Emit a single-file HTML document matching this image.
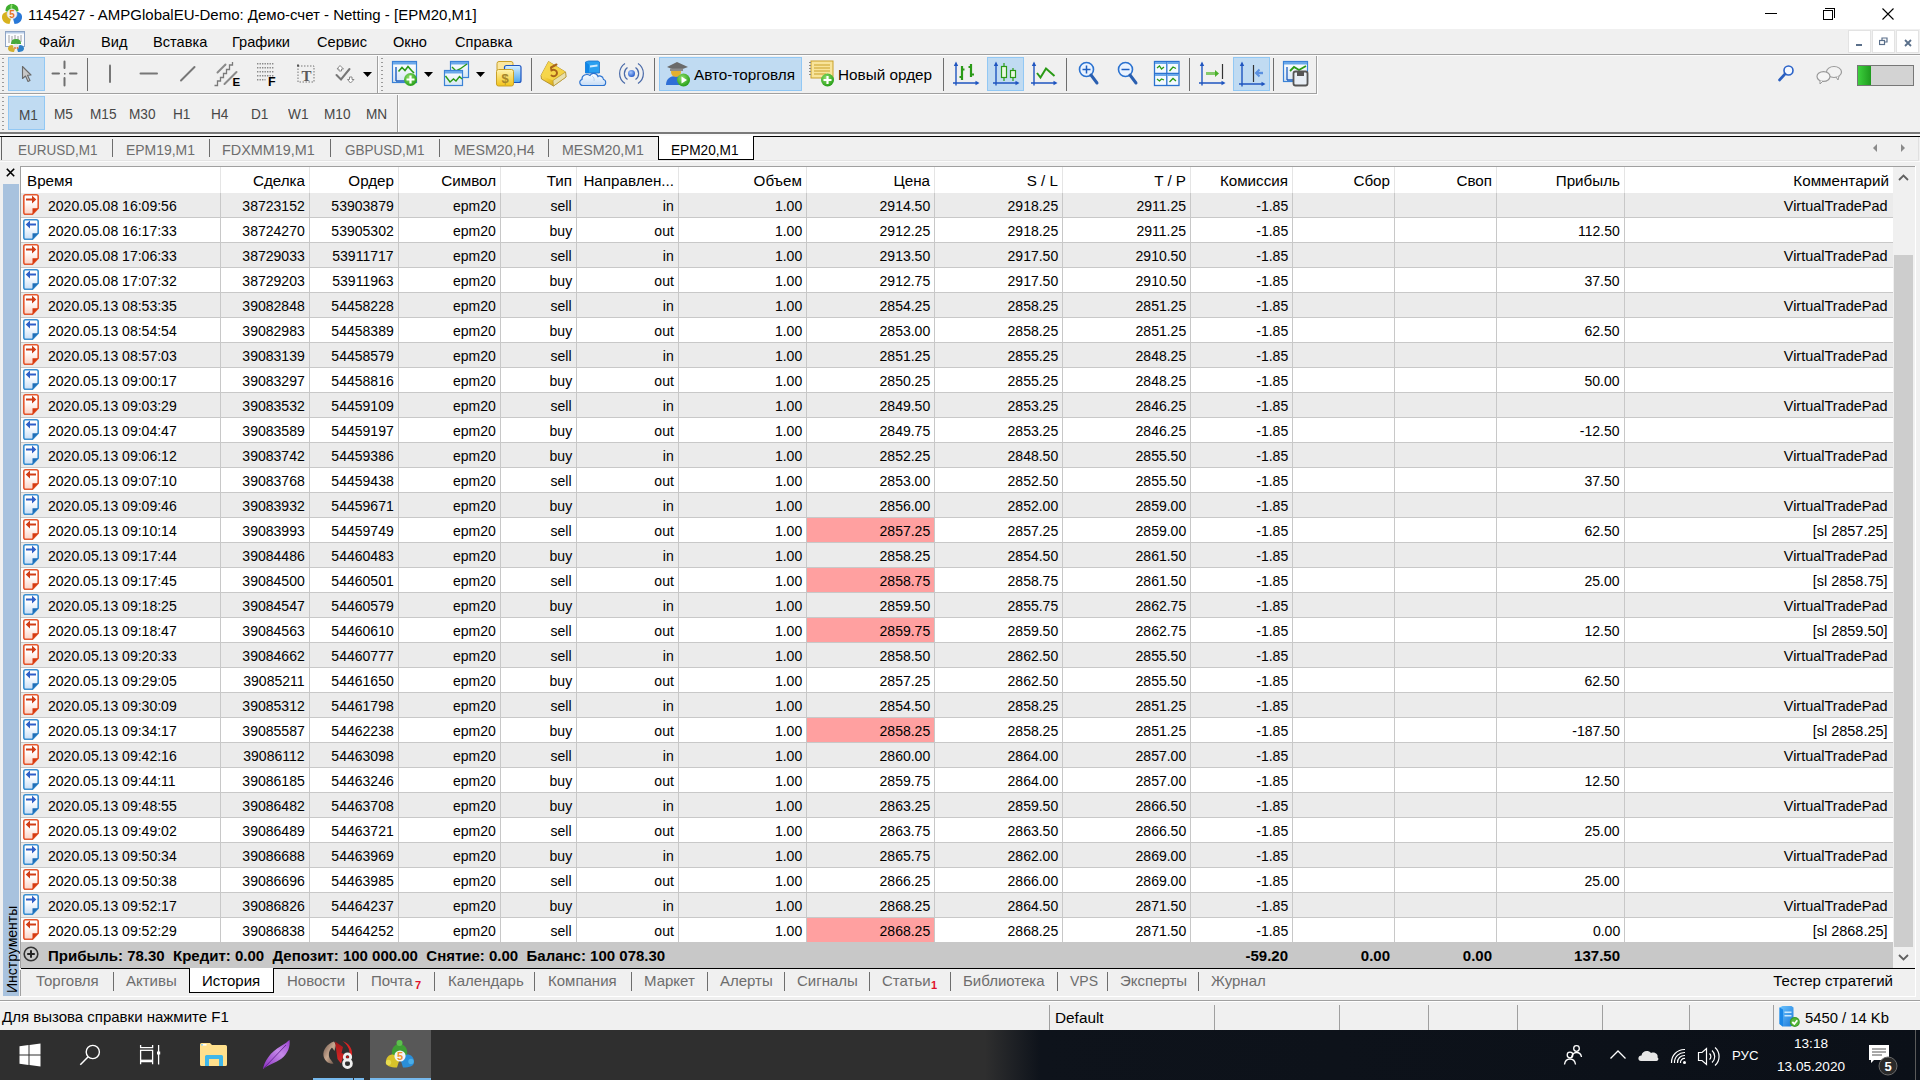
<!DOCTYPE html><html><head><meta charset="utf-8"><title>MT5</title><style>
*{box-sizing:border-box}
html,body{margin:0;padding:0}
body{width:1920px;height:1080px;overflow:hidden;position:relative;background:#f0f0f0;font-family:"Liberation Sans",sans-serif;}
.t{position:absolute;white-space:pre}
.a{position:absolute}
.hl{position:absolute;background:#c0dbf2;border:1px solid #92c8f4}
.sep{position:absolute;width:1px;background:#a0a0a0}
</style></head><body>
<div class="a" style="left:0;top:0;width:1920px;height:29px;background:#fff"></div>
<svg class="a" style="left:0;top:0" width="26" height="28" viewBox="0 0 26 28">
<path d="M5.5 11C5.5 6 8.5 4 12 4C15.5 4 18.5 6 18.5 11L12 14Z" fill="#3fae2e"/>
<path d="M12 4.5C11 6 11 8 12 9.5" stroke="#8ee070" stroke-width="1.5" fill="none"/>
<path d="M2 17C2 13.5 4.5 12 7.5 12L12 15L9.5 24C5 24 2 21 2 17Z" fill="#d8b21e"/>
<path d="M22 17C22 13.5 19.5 12 16.5 12L12 15L14.5 24C19 24 22 21 22 17Z" fill="#2878d8"/>
<circle cx="12" cy="14" r="5" fill="#f2f2f2" stroke="#d8d8d8" stroke-width="0.6"/>
<text x="12" y="17.8" font-size="10" font-weight="bold" text-anchor="middle" fill="#e8761e" font-family="Liberation Sans">5</text>
</svg>
<div class="t" style="left:28px;top:7px;font-size:15px;line-height:15px;color:#000;font-weight:normal;">1145427 - AMPGlobalEU-Demo: Демо-счет - Netting - [EPM20,M1]</div>
<div class="a" style="left:1765px;top:13px;width:12px;height:1px;background:#000"></div>
<div class="a" style="left:1823px;top:10px;width:10px;height:10px;border:1px solid #000;background:#fff"></div>
<div class="a" style="left:1825px;top:8px;width:10px;height:10px;border-top:1px solid #000;border-right:1px solid #000"></div>
<svg class="a" style="left:1882px;top:8px" width="12" height="12" viewBox="0 0 12 12"><path d="M0.5 0.5L11.5 11.5M11.5 0.5L0.5 11.5" stroke="#000" stroke-width="1.1"/></svg>
<div class="a" style="left:0;top:29px;width:1920px;height:25px;background:#f0f0f0"></div>
<div class="a" style="left:0;top:54px;width:1920px;height:1px;background:#a0a0a0"></div>
<div class="a" style="left:0;top:55px;width:1920px;height:1px;background:#fdfdfd"></div>
<svg class="a" style="left:4px;top:30px" width="22" height="24" viewBox="0 0 22 24">
<rect x="1.5" y="1.5" width="19" height="15" fill="#fafcff" stroke="#8ea4c4" stroke-width="1"/>
<rect x="2" y="2" width="18" height="1.5" fill="#b8cce6"/>
<g stroke="#888" stroke-width="0.8"><path d="M5 5V13M8 6V11M11 5V9M14 6V10M17 5V12"/></g>
<path d="M7 14C7 10 9 9 12 9C15 9 17 10 17 14Z" fill="#46a83a"/>
<path d="M4 18.5C4 16 6 15 8 15L11.5 17L10 22C6.5 22 4 21 4 18.5Z" fill="#d2b030"/>
<path d="M20 18.5C20 16 18 15 16 15L12.5 17L14 22C17.5 22 20 21 20 18.5Z" fill="#2f80c8"/>
<circle cx="12" cy="16.5" r="2.8" fill="#e8e8e8"/>
<circle cx="11" cy="18" r="0.9" fill="#e07030"/><circle cx="13.5" cy="18" r="0.9" fill="#e07030"/>
</svg>
<div class="t" style="left:39px;top:35px;font-size:14.6px;line-height:14.6px;color:#000;font-weight:normal;">Файл</div>
<div class="t" style="left:101px;top:35px;font-size:14.6px;line-height:14.6px;color:#000;font-weight:normal;">Вид</div>
<div class="t" style="left:153px;top:35px;font-size:14.6px;line-height:14.6px;color:#000;font-weight:normal;">Вставка</div>
<div class="t" style="left:232px;top:35px;font-size:14.6px;line-height:14.6px;color:#000;font-weight:normal;">Графики</div>
<div class="t" style="left:317px;top:35px;font-size:14.6px;line-height:14.6px;color:#000;font-weight:normal;">Сервис</div>
<div class="t" style="left:393px;top:35px;font-size:14.6px;line-height:14.6px;color:#000;font-weight:normal;">Окно</div>
<div class="t" style="left:455px;top:35px;font-size:14.6px;line-height:14.6px;color:#000;font-weight:normal;">Справка</div>
<div class="a" style="left:1848px;top:30px;width:23px;height:23px;background:#fff;border:1px solid #e3e3e3"></div>
<div class="a" style="left:1872px;top:30px;width:23px;height:23px;background:#fff;border:1px solid #e3e3e3"></div>
<div class="a" style="left:1896px;top:30px;width:23px;height:23px;background:#fff;border:1px solid #e3e3e3"></div>
<div class="a" style="left:1856px;top:44px;width:6px;height:2px;background:#5a6f8a"></div>
<svg class="a" style="left:1879px;top:37px" width="9" height="9" viewBox="0 0 9 9"><rect x="0.5" y="3.5" width="5" height="4" fill="none" stroke="#5a6f8a" stroke-width="1.2"/><path d="M3 3.5V1h5v4H5.5" fill="none" stroke="#5a6f8a" stroke-width="1.2"/></svg>
<svg class="a" style="left:1904px;top:39px" width="8" height="8" viewBox="0 0 8 8"><path d="M1 1L7 7M7 1L1 7" stroke="#5a6f8a" stroke-width="1.8"/></svg>
<div class="hl" style="left:8px;top:57px;width:37px;height:34px"></div>
<div class="hl" style="left:659px;top:57px;width:143px;height:34px"></div>
<div class="hl" style="left:987px;top:57px;width:37px;height:34px"></div>
<div class="hl" style="left:1233px;top:57px;width:37px;height:34px"></div>
<div class="t" style="left:694px;top:65px;font-size:15.3px;line-height:20px;color:#000">Авто-торговля</div>
<div class="t" style="left:838px;top:65px;font-size:15.3px;line-height:20px;color:#000">Новый ордер</div>
<svg class="a" style="left:0;top:0" width="1920" height="96" viewBox="0 0 1920 96">
<defs>
<linearGradient id="winbg" x1="0" y1="0" x2="0" y2="1"><stop offset="0" stop-color="#ffffff"/><stop offset="1" stop-color="#d6e6f5"/></linearGradient>
<radialGradient id="greenb" cx="0.4" cy="0.35" r="0.7"><stop offset="0" stop-color="#8fe06a"/><stop offset="1" stop-color="#1f9a12"/></radialGradient>
<linearGradient id="yel" x1="0" y1="0" x2="0" y2="1"><stop offset="0" stop-color="#fff3b0"/><stop offset="1" stop-color="#f2c418"/></linearGradient>
<linearGradient id="blu" x1="0" y1="0" x2="0" y2="1"><stop offset="0" stop-color="#d8f0ff"/><stop offset="1" stop-color="#4aa6ef"/></linearGradient>
<linearGradient id="cloudg" x1="0" y1="0" x2="0" y2="1"><stop offset="0" stop-color="#ffffff"/><stop offset="1" stop-color="#c6dcf5"/></linearGradient>
<radialGradient id="blued" cx="0.4" cy="0.35" r="0.7"><stop offset="0" stop-color="#a6c8ff"/><stop offset="1" stop-color="#1f55c8"/></radialGradient>
</defs>
<!-- grippers -->
<g fill="#9a9a9a">
<rect x="2" y="58" width="2" height="1"/><rect x="2" y="62" width="2" height="1"/><rect x="2" y="66" width="2" height="1"/><rect x="2" y="70" width="2" height="1"/><rect x="2" y="74" width="2" height="1"/><rect x="2" y="78" width="2" height="1"/><rect x="2" y="82" width="2" height="1"/><rect x="2" y="86" width="2" height="1"/><rect x="2" y="90" width="2" height="1"/>
<rect x="381" y="58" width="2" height="1"/><rect x="381" y="62" width="2" height="1"/><rect x="381" y="66" width="2" height="1"/><rect x="381" y="70" width="2" height="1"/><rect x="381" y="74" width="2" height="1"/><rect x="381" y="78" width="2" height="1"/><rect x="381" y="82" width="2" height="1"/><rect x="381" y="86" width="2" height="1"/><rect x="381" y="90" width="2" height="1"/>
</g>
<!-- toolbar ends / separators -->
<rect x="377" y="56" width="1" height="37" fill="#a0a0a0"/><rect x="378" y="56" width="1" height="37" fill="#fdfdfd"/>
<rect x="1316" y="56" width="1" height="37" fill="#a0a0a0"/>
<g fill="#6e6e6e">
<rect x="87" y="58" width="1" height="33"/>
<rect x="531" y="58" width="1" height="33"/>
<rect x="654" y="58" width="1" height="33"/>
<rect x="943" y="58" width="1" height="33"/>
<rect x="1066" y="58" width="1" height="33"/>
<rect x="1189" y="58" width="1" height="33"/>
<rect x="1273" y="58" width="1" height="33"/>
</g>
<!-- cursor -->
<path d="M22.5 66.5L22.5 78.5L25.5 76L28 81.5L30 80.5L27.5 75.2L31 75Z" fill="#c8c8c8" stroke="#6a6a6a" stroke-width="1.1" stroke-linejoin="round"/>
<!-- crosshair -->
<g stroke="#6f6f6f" stroke-width="2" stroke-linecap="round">
<path d="M64.5 61.5V68M64.5 78V85.5M52.5 73.5H59M70 73.5H76.5"/>
</g>
<rect x="64" y="73" width="1.5" height="1.5" fill="#6f6f6f"/>
<!-- vertical line -->
<path d="M110 65.5V82" stroke="#777" stroke-width="2" stroke-linecap="round"/>
<!-- horizontal line -->
<path d="M140.5 73.5H157" stroke="#777" stroke-width="2" stroke-linecap="round"/>
<!-- trendline -->
<path d="M181 80.5L194.5 67" stroke="#777" stroke-width="2" stroke-linecap="round"/>
<!-- channel E -->
<g stroke="#8a8a8a" stroke-width="2" stroke-linecap="round" fill="none">
<path d="M217.5 72.5L225.5 64.5"/><path d="M224.5 84L236.5 72"/>
</g>
<path d="M214.5 85.5H217.5V81H220.5V77.5H223.5V73.5H226.5V69.5H229.5V65H232.5V62" stroke="#7a7a7a" stroke-width="1.3" fill="none"/>
<text x="232.5" y="86" font-family="Liberation Sans" font-weight="bold" font-size="11.5" fill="#000">E</text>
<!-- fibo F -->
<g stroke="#8a8a8a" stroke-width="1.6" stroke-dasharray="1.4 1.1" fill="none">
<path d="M257 63.8H274"/><path d="M257 67.8H274"/><path d="M257 71.8H274"/><path d="M257 75.8H274"/><path d="M257 79.8H265.5"/>
</g>
<text x="268" y="86" font-family="Liberation Sans" font-weight="bold" font-size="12.5" fill="#000">F</text>
<!-- text T -->
<rect x="298" y="66" width="16" height="16" fill="none" stroke="#777" stroke-width="1" stroke-dasharray="1.5 1.5"/>
<rect x="297" y="64.5" width="2" height="2" fill="#555"/>
<text x="306.5" y="80.5" font-family="Liberation Serif" font-weight="bold" font-size="15" fill="#5a5a5a" text-anchor="middle">T</text>
<!-- arrows icon -->
<path d="M336.5 75L341 79.5L349.5 69" stroke="#777" stroke-width="2" fill="none" stroke-linecap="round"/>
<path d="M340 65.5L337 69H339V71H341.5V69H343.5Z" fill="#fff" stroke="#888" stroke-width="1"/>
<path d="M350.5 83L347.5 79.5H349.5V77H352V79.5H354Z" fill="#fff" stroke="#888" stroke-width="1"/>
<!-- dropdowns -->
<path d="M363 72H372L367.5 77Z" fill="#000"/>
<path d="M424 72H433L428.5 77Z" fill="#000"/>
<path d="M476 72H485L480.5 77Z" fill="#000"/>
<!-- new chart -->
<rect x="392.5" y="61.5" width="24" height="21" fill="url(#winbg)" stroke="#3b82d6" stroke-width="1.2"/>
<rect x="393" y="62" width="23" height="2.5" fill="#6aa8ea"/>
<path d="M396 67V81M396 81H408" stroke="#1f5fc0" stroke-width="1.4"/>
<path d="M398.5 71.5L402 67.5L405 70.5L408 66.5L411.5 70.5L414 73" stroke="#2a9a16" stroke-width="1.6" fill="none"/>
<circle cx="410.5" cy="79.5" r="6.5" fill="url(#greenb)"/>
<path d="M410.5 75.5V83.5M406.5 79.5H414.5" stroke="#fff" stroke-width="2.2"/>
<!-- profiles -->
<rect x="450.5" y="61.5" width="18" height="16" fill="url(#winbg)" stroke="#3b82d6" stroke-width="1.2"/>
<rect x="451" y="62" width="17" height="2.5" fill="#6aa8ea"/>
<path d="M452 67L456 71L460 69L467 64" stroke="#2a9a16" stroke-width="1.4" fill="none"/>
<rect x="444.5" y="70.5" width="18" height="15" fill="url(#winbg)" stroke="#3b82d6" stroke-width="1.2"/>
<rect x="445" y="71" width="17" height="2.5" fill="#6aa8ea"/>
<path d="M445.5 76L450 82L453.5 79L456 81L459.5 76.5L462 79" stroke="#2a9a16" stroke-width="1.4" fill="none"/>
<!-- dollar -->
<rect x="497" y="61.5" width="16" height="10" rx="2" fill="#fbe7a0" stroke="#c9a028" stroke-width="1"/>
<rect x="504.5" y="65.5" width="16.5" height="17" rx="2" fill="url(#blu)" stroke="#1e55c0" stroke-width="1.2"/>
<rect x="496.5" y="69.5" width="17" height="16.5" rx="2" fill="url(#yel)" stroke="#c9a028" stroke-width="1"/>
<text x="505" y="83" font-family="Liberation Sans" font-weight="bold" font-size="13" fill="#a6862a" text-anchor="middle">$</text>
<!-- book 5 -->
<defs><linearGradient id="gold" x1="0" y1="0" x2="1" y2="1"><stop offset="0" stop-color="#fff2a8"/><stop offset="0.5" stop-color="#f0c830"/><stop offset="1" stop-color="#b88a10"/></linearGradient></defs>
<path d="M541 75.5L548.5 61.5L565.5 72L566 77L553.5 86L541.5 79Z" fill="url(#gold)" stroke="#a88420" stroke-width="0.8" stroke-linejoin="round"/>
<path d="M548.5 61.5L565.5 72L553 80.5L541 75.5Z" fill="#f6d64a" opacity="0.9"/>
<path d="M553 80.5L565.5 72L566 77L553.5 86Z" fill="#e8e0b0" stroke="#b0902a" stroke-width="0.6"/>
<path d="M556.5 64.5L551 67.5L551.5 70.5C553.5 69 557 70 557 73C557 76 554 77 551.5 75.5" fill="none" stroke="#a8641a" stroke-width="2" stroke-linecap="round" stroke-linejoin="round"/>
<!-- cloud server -->
<path d="M585.5 62L588.5 61H598L599.5 62V73H585.5Z" fill="#2a9ff0" stroke="#1a70c8" stroke-width="0.8"/>
<path d="M585.5 62L589 64.5V73H585.5Z" fill="#0f86e8"/>
<path d="M590 65.5L597.5 64.5V66.5L590 67.5Z" fill="#cfeaff"/>
<path d="M582.5 85.5C579.5 85.5 578.5 80.5 582 79.5C581.5 75.5 586.5 73 590 75.5C591.5 72.5 596.5 72.5 598 76.5C598.5 75.5 603 75.5 603.5 79.5C606.5 80 606.5 85.5 603 85.5Z" fill="url(#cloudg)" stroke="#2a72d0" stroke-width="1.1"/>
<path d="M592 76C594 77 594.5 79.5 594 81" fill="none" stroke="#a8c8ee" stroke-width="0.8"/>
<!-- signal -->
<circle cx="631.5" cy="73.5" r="3.5" fill="url(#blued)"/>
<g fill="none" stroke="#4a6aa8" stroke-width="1.2">
<path d="M627.5 67.5A7.3 7.3 0 0 0 627.5 79.5"/><path d="M635.5 67.5A7.3 7.3 0 0 1 635.5 79.5"/>
<path d="M625 63.5A12 12 0 0 0 625 83.5"/><path d="M638 63.5A12 12 0 0 1 638 83.5"/>
</g>
<!-- autotrading -->
<path d="M666 85C666 79 670 76 676 76C682 76 686 79 686 85Z" fill="#2f6fd6"/>
<circle cx="676" cy="72" r="5" fill="#e2b030"/>
<path d="M667 67L677 62L688 67L677 71Z" fill="#6a6a6a"/>
<path d="M670 68.5V71H683V68.5" fill="#8a8a8a"/>
<circle cx="683.5" cy="80" r="6.5" fill="url(#greenb)"/>
<path d="M681.5 76.5V83.5L687 80Z" fill="#fff"/>
<!-- new order -->
<rect x="811" y="61" width="22" height="17" fill="#f8e49a" stroke="#c9a028" stroke-width="1"/>
<g stroke="#c9a028" stroke-width="1"><path d="M814 65H830M814 68H830M814 71H830M814 74H826"/></g>
<g fill="#888"><rect x="809" y="62" width="2" height="1"/><rect x="809" y="65" width="2" height="1"/><rect x="809" y="68" width="2" height="1"/><rect x="809" y="71" width="2" height="1"/><rect x="809" y="74" width="2" height="1"/></g>
<circle cx="827.5" cy="80" r="6.5" fill="url(#greenb)"/>
<path d="M827.5 76V84M823.5 80H831.5" stroke="#fff" stroke-width="2.2"/>
<!-- axes helper for chart icons -->
<g stroke="#1f55c0" stroke-width="1.4" fill="#1f55c0">
<path d="M956 64V85.5M953 83H976" fill="none"/><path d="M953.8 66L956 61.5L958.2 66Z" stroke="none"/><path d="M975.5 80.8L979.5 83L975.5 85.2Z" stroke="none"/>
<path d="M996 64V85.5M993 83H1016" fill="none"/><path d="M993.8 66L996 61.5L998.2 66Z" stroke="none"/><path d="M1015.5 80.8L1019.5 83L1015.5 85.2Z" stroke="none"/>
<path d="M1034 64V85.5M1031 83H1054" fill="none"/><path d="M1031.8 66L1034 61.5L1036.2 66Z" stroke="none"/><path d="M1053.5 80.8L1057.5 83L1053.5 85.2Z" stroke="none"/>
<path d="M1202 64V85.5M1199 83H1222" fill="none"/><path d="M1199.8 66L1202 61.5L1204.2 66Z" stroke="none"/><path d="M1221.5 80.8L1225.5 83L1221.5 85.2Z" stroke="none"/>
<path d="M1242 64V86.5M1239 84H1262" fill="none"/><path d="M1239.8 66L1242 61.5L1244.2 66Z" stroke="none"/><path d="M1261.5 81.8L1265.5 84L1261.5 86.2Z" stroke="none"/>
</g>
<!-- bars -->
<g stroke="#2a9a16" stroke-width="2.2" fill="none">
<path d="M962 66V80M959.5 77H962M962 69.5H964.5"/>
<path d="M971 64V77M968.5 67H971M971 74.5H974"/>
</g>
<!-- candles -->
<g stroke="#2a9a16" stroke-width="1.2">
<path d="M1004 63V81M1013 68V81" fill="none"/>
<rect x="1001.5" y="66.5" width="5" height="11" fill="#e8f8e0"/>
<rect x="1010.5" y="70.5" width="5" height="7" fill="#e8f8e0"/>
</g>
<!-- line chart -->
<path d="M1037 73L1040.5 77.5L1046 68.5L1054.5 76" stroke="#2a9a16" stroke-width="2" fill="none"/>
<!-- zoom in/out -->
<g>
<circle cx="1086.5" cy="69.5" r="7" fill="#eaf3ff" stroke="#2a72d0" stroke-width="1.6"/>
<path d="M1086.5 65.5V73.5M1082.5 69.5H1090.5" stroke="#1f5fc0" stroke-width="1.5"/>
<path d="M1091 75L1097 83" stroke="#2a5fb0" stroke-width="3" stroke-linecap="round"/>
<circle cx="1125.5" cy="69.5" r="7" fill="#eaf3ff" stroke="#2a72d0" stroke-width="1.6"/>
<path d="M1121.5 69.5H1129.5" stroke="#1f5fc0" stroke-width="1.5"/>
<path d="M1130 75L1136 83" stroke="#2a5fb0" stroke-width="3" stroke-linecap="round"/>
</g>
<!-- tile -->
<rect x="1154.5" y="61.5" width="24.5" height="24" fill="#f4f9ff" stroke="#2a72d0" stroke-width="1.3"/>
<path d="M1166.8 61.5V85.5M1154.5 73.5H1179" stroke="#2a72d0" stroke-width="1.3"/>
<g fill="#6aa8ea"><rect x="1155" y="62" width="11" height="2"/><rect x="1167.5" y="62" width="11" height="2"/><rect x="1155" y="74" width="11" height="2"/><rect x="1167.5" y="74" width="11" height="2"/></g>
<g stroke="#2a9a16" stroke-width="1.3" fill="none">
<path d="M1157 68L1159.5 66L1161.5 69L1164 67"/><path d="M1169.5 71L1173 67L1176 68.5"/>
<path d="M1157 79L1159.5 81L1161.5 79L1164 80"/><path d="M1169.5 82L1173 78.5L1176 81"/>
</g>
<!-- autoscroll -->
<path d="M1206 73.5H1216" stroke="#6ac04a" stroke-width="3" opacity="0.8"/>
<path d="M1215 70L1219 73.5L1215 77Z" fill="#4ab02a"/>
<path d="M1222.5 64V79" stroke="#333" stroke-width="1.2"/>
<!-- chart shift -->
<path d="M1253.5 65V82" stroke="#333" stroke-width="1.2"/>
<path d="M1256 73H1263" stroke="#5a90e0" stroke-width="2.4"/>
<path d="M1259.5 69.5L1256 73L1259.5 76.5" fill="none" stroke="#5a90e0" stroke-width="2"/>
<!-- template -->
<rect x="1283.5" y="61.5" width="24" height="20" fill="url(#winbg)" stroke="#3b82d6" stroke-width="1.2"/>
<rect x="1284" y="62" width="23" height="2.5" fill="#6aa8ea"/>
<path d="M1287 67V80M1287 80H1293" stroke="#1f5fc0" stroke-width="1.3"/>
<path d="M1290 71L1294 67L1299 70L1306 66" stroke="#2a9a16" stroke-width="1.8" fill="none"/>
<rect x="1293.5" y="71.5" width="14" height="14" rx="2" fill="#e8eef5" stroke="#555" stroke-width="1.8"/>
<rect x="1297" y="72" width="7" height="4" fill="#555"/>
<!-- search -->
<circle cx="1788.5" cy="70.5" r="4.5" fill="#f4f8ff" stroke="#2a62c8" stroke-width="1.6"/>
<path d="M1785 74L1779.5 80" stroke="#2a5fc0" stroke-width="2.6" stroke-linecap="round"/>
<!-- chat -->
<ellipse cx="1834" cy="72" rx="7.5" ry="5.5" fill="#f2f2f2" stroke="#9a9a9a" stroke-width="1.2"/>
<path d="M1836 77L1838 80L1839 76" fill="#f2f2f2" stroke="#9a9a9a" stroke-width="1"/>
<ellipse cx="1823.5" cy="76.5" rx="6.5" ry="4.8" fill="#f6f6f6" stroke="#9a9a9a" stroke-width="1.2"/>
<path d="M1820 80.5L1820 84L1823 81" fill="#f6f6f6" stroke="#9a9a9a" stroke-width="1"/>
</svg>
<div class="a" style="left:1857px;top:65px;width:57px;height:21px;background:#d3d3d3;border:1px solid #777"></div>
<div class="a" style="left:1858px;top:66px;width:13px;height:19px;background:linear-gradient(90deg,#3cd03c,#1f9a1f)"></div>

<div class="a" style="left:0;top:93px;width:1317px;height:1px;background:#a0a0a0"></div>
<div class="a" style="left:0;top:94px;width:1318px;height:1px;background:#fdfdfd"></div>
<div class="a" style="left:1317px;top:56px;width:1px;height:38px;background:#fdfdfd"></div>
<div class="a" style="left:0;top:132px;width:1920px;height:2px;background:#7a7a7a"></div>
<div class="a" style="left:0;top:134px;width:1920px;height:2px;background:#fafafa"></div>
<div class="hl" style="left:8px;top:96px;width:37px;height:34px"></div>
<div class="t" style="left:19px;top:107px;font-size:15px;line-height:15px;color:#474747;font-weight:normal;transform:scaleX(0.91);transform-origin:0 0">M1</div>
<div class="t" style="left:54px;top:106px;font-size:15px;line-height:15px;color:#474747;font-weight:normal;transform:scaleX(0.91);transform-origin:0 0">M5</div>
<div class="t" style="left:90px;top:106px;font-size:15px;line-height:15px;color:#474747;font-weight:normal;transform:scaleX(0.91);transform-origin:0 0">M15</div>
<div class="t" style="left:129px;top:106px;font-size:15px;line-height:15px;color:#474747;font-weight:normal;transform:scaleX(0.91);transform-origin:0 0">M30</div>
<div class="t" style="left:173px;top:106px;font-size:15px;line-height:15px;color:#474747;font-weight:normal;transform:scaleX(0.91);transform-origin:0 0">H1</div>
<div class="t" style="left:211px;top:106px;font-size:15px;line-height:15px;color:#474747;font-weight:normal;transform:scaleX(0.91);transform-origin:0 0">H4</div>
<div class="t" style="left:251px;top:106px;font-size:15px;line-height:15px;color:#474747;font-weight:normal;transform:scaleX(0.91);transform-origin:0 0">D1</div>
<div class="t" style="left:288px;top:106px;font-size:15px;line-height:15px;color:#474747;font-weight:normal;transform:scaleX(0.91);transform-origin:0 0">W1</div>
<div class="t" style="left:324px;top:106px;font-size:15px;line-height:15px;color:#474747;font-weight:normal;transform:scaleX(0.91);transform-origin:0 0">M10</div>
<div class="t" style="left:366px;top:106px;font-size:15px;line-height:15px;color:#474747;font-weight:normal;transform:scaleX(0.91);transform-origin:0 0">MN</div>
<div class="a" style="left:2px;top:97px;width:2px;height:33px;background:repeating-linear-gradient(#9a9a9a 0 1px,transparent 1px 4px)"></div>
<div class="a" style="left:397px;top:95px;width:1px;height:37px;background:#a0a0a0"></div>
<div class="a" style="left:398px;top:95px;width:1px;height:37px;background:#fdfdfd"></div>
<div class="a" style="left:0;top:136px;width:1920px;height:1px;background:#000"></div>
<div class="a" style="left:1px;top:137px;width:1px;height:23px;background:#646464"></div>
<div class="a" style="left:1918px;top:137px;width:1px;height:23px;background:#e0e0e0"></div>
<div class="a" style="left:0;top:160px;width:1919px;height:1px;background:#e3e3e3"></div>
<div class="t" style="left:18px;top:142px;font-size:15px;line-height:15px;color:#6d6d6d;font-weight:normal;transform:scaleX(0.9);transform-origin:0 0">EURUSD,M1</div>
<div class="t" style="left:126px;top:142px;font-size:15px;line-height:15px;color:#6d6d6d;font-weight:normal;transform:scaleX(0.93);transform-origin:0 0">EPM19,M1</div>
<div class="t" style="left:222px;top:142px;font-size:15px;line-height:15px;color:#6d6d6d;font-weight:normal;transform:scaleX(0.96);transform-origin:0 0">FDXMM19,M1</div>
<div class="t" style="left:345px;top:142px;font-size:15px;line-height:15px;color:#6d6d6d;font-weight:normal;transform:scaleX(0.9);transform-origin:0 0">GBPUSD,M1</div>
<div class="t" style="left:454px;top:142px;font-size:15px;line-height:15px;color:#6d6d6d;font-weight:normal;transform:scaleX(0.95);transform-origin:0 0">MESM20,H4</div>
<div class="t" style="left:562px;top:142px;font-size:15px;line-height:15px;color:#6d6d6d;font-weight:normal;transform:scaleX(0.946);transform-origin:0 0">MESM20,M1</div>
<div class="a" style="left:112px;top:139px;width:1px;height:18px;background:#6d6d6d"></div>
<div class="a" style="left:209px;top:139px;width:1px;height:18px;background:#6d6d6d"></div>
<div class="a" style="left:330px;top:139px;width:1px;height:18px;background:#6d6d6d"></div>
<div class="a" style="left:439px;top:139px;width:1px;height:18px;background:#6d6d6d"></div>
<div class="a" style="left:548px;top:139px;width:1px;height:18px;background:#6d6d6d"></div>
<div class="a" style="left:658px;top:136px;width:96px;height:24px;background:#fff;border:1px solid #000;border-top:none"></div>
<div class="t" style="left:671px;top:142px;font-size:15px;line-height:15px;color:#000;font-weight:normal;transform:scaleX(0.91);transform-origin:0 0">EPM20,M1</div>
<div class="a" style="left:0;top:161px;width:1920px;height:1px;background:#fbfbfb"></div>
<div class="a" style="left:1873px;top:144px;width:0;height:0;border-top:4px solid transparent;border-bottom:4px solid transparent;border-right:4px solid #8a8a8a"></div>
<div class="a" style="left:1901px;top:144px;width:0;height:0;border-top:4px solid transparent;border-bottom:4px solid transparent;border-left:4px solid #8a8a8a"></div>
<div class="a" style="left:6px;top:168px;"><svg style="display:block" width="9" height="9" viewBox="0 0 9 9"><path d="M0.8 0.8L8.2 8.2M8.2 0.8L0.8 8.2" stroke="#000" stroke-width="1.6"/></svg></div>
<div class="a" style="left:3px;top:184px;width:16px;height:812px;background:#a8c2de"></div>
<div class="t" style="left:4px;top:993px;width:86px;height:16px;transform-origin:0 0;transform:rotate(-90deg);font-size:14px;line-height:16px;color:#000">Инструменты</div>
<div class="a" style="left:20px;top:166px;width:1895px;height:1px;background:#a0a0a0"></div>
<div class="a" style="left:20px;top:166px;width:1px;height:802px;background:#a0a0a0"></div>
<div class="a" style="left:21px;top:167px;width:1872px;height:26px;background:#fff"></div>
<div class="t" style="left:27px;top:173px;font-size:15.2px;line-height:15.2px;color:#000;font-weight:normal;">Время</div>
<div class="t" style="right:1615px;top:173px;font-size:15.2px;line-height:15.2px;color:#000;font-weight:normal;">Сделка</div>
<div class="t" style="right:1526px;top:173px;font-size:15.2px;line-height:15.2px;color:#000;font-weight:normal;">Ордер</div>
<div class="t" style="right:1424px;top:173px;font-size:15.2px;line-height:15.2px;color:#000;font-weight:normal;">Символ</div>
<div class="t" style="right:1348px;top:173px;font-size:15.2px;line-height:15.2px;color:#000;font-weight:normal;">Тип</div>
<div class="t" style="right:1246px;top:173px;font-size:15.2px;line-height:15.2px;color:#000;font-weight:normal;">Направлен...</div>
<div class="t" style="right:1118px;top:173px;font-size:15.2px;line-height:15.2px;color:#000;font-weight:normal;">Объем</div>
<div class="t" style="right:990px;top:173px;font-size:15.2px;line-height:15.2px;color:#000;font-weight:normal;">Цена</div>
<div class="t" style="right:862px;top:173px;font-size:15.2px;line-height:15.2px;color:#000;font-weight:normal;">S / L</div>
<div class="t" style="right:734px;top:173px;font-size:15.2px;line-height:15.2px;color:#000;font-weight:normal;">T / P</div>
<div class="t" style="right:632px;top:173px;font-size:15.2px;line-height:15.2px;color:#000;font-weight:normal;">Комиссия</div>
<div class="t" style="right:530px;top:173px;font-size:15.2px;line-height:15.2px;color:#000;font-weight:normal;">Сбор</div>
<div class="t" style="right:428px;top:173px;font-size:15.2px;line-height:15.2px;color:#000;font-weight:normal;">Своп</div>
<div class="t" style="right:300px;top:173px;font-size:15.2px;line-height:15.2px;color:#000;font-weight:normal;">Прибыль</div>
<div class="t" style="right:31px;top:173px;font-size:15.2px;line-height:15.2px;color:#000;font-weight:normal;">Комментарий</div>
<div class="a" style="left:220px;top:167px;width:1px;height:26px;background:#e5e5e5"></div>
<div class="a" style="left:309px;top:167px;width:1px;height:26px;background:#e5e5e5"></div>
<div class="a" style="left:398px;top:167px;width:1px;height:26px;background:#e5e5e5"></div>
<div class="a" style="left:500px;top:167px;width:1px;height:26px;background:#e5e5e5"></div>
<div class="a" style="left:576px;top:167px;width:1px;height:26px;background:#e5e5e5"></div>
<div class="a" style="left:678px;top:167px;width:1px;height:26px;background:#e5e5e5"></div>
<div class="a" style="left:806px;top:167px;width:1px;height:26px;background:#e5e5e5"></div>
<div class="a" style="left:934px;top:167px;width:1px;height:26px;background:#e5e5e5"></div>
<div class="a" style="left:1062px;top:167px;width:1px;height:26px;background:#e5e5e5"></div>
<div class="a" style="left:1190px;top:167px;width:1px;height:26px;background:#e5e5e5"></div>
<div class="a" style="left:1292px;top:167px;width:1px;height:26px;background:#e5e5e5"></div>
<div class="a" style="left:1394px;top:167px;width:1px;height:26px;background:#e5e5e5"></div>
<div class="a" style="left:1496px;top:167px;width:1px;height:26px;background:#e5e5e5"></div>
<div class="a" style="left:1624px;top:167px;width:1px;height:26px;background:#e5e5e5"></div>
<div class="a" style="left:21px;top:193px;width:1872px;height:24px;background:#ebebeb"></div>
<div class="a" style="left:21px;top:217px;width:1872px;height:1px;background:#c8c8c8"></div>
<div class="a" style="left:23px;top:194px"><svg width="16" height="21" viewBox="0 0 16 21"><defs><linearGradient id="gsellin" x1="0" y1="0" x2="0" y2="1"><stop offset="0.35" stop-color="#fff"/><stop offset="1" stop-color="#fbd3c6"/></linearGradient></defs><path d="M2.5 0.8H13.2Q15.2 0.8 15.2 2.8V14.3L9.5 20.2H2.5Q0.8 20.2 0.8 18.2V2.8Q0.8 0.8 2.5 0.8Z" fill="url(#gsellin)" stroke="#e4572e" stroke-width="1.6"/><path d="M15.2 14.3L9.5 20.2V14.3Z" fill="#d63a10"/><path d="M3 4.6H9V1.6L13.3 5.6L9 9.6V6.6H3Z" fill="#d23c16"/></svg></div>
<div class="t" style="left:48px;top:198px;font-size:15px;line-height:15px;color:#000;font-weight:normal;transform:scaleX(0.935);transform-origin:0 0">2020.05.08 16:09:56</div>
<div class="t" style="right:1615px;top:198px;font-size:15px;line-height:15px;color:#000;font-weight:normal;transform:scaleX(0.935);transform-origin:100% 0">38723152</div>
<div class="t" style="right:1526px;top:198px;font-size:15px;line-height:15px;color:#000;font-weight:normal;transform:scaleX(0.935);transform-origin:100% 0">53903879</div>
<div class="t" style="right:1424px;top:198px;font-size:15px;line-height:15px;color:#000;font-weight:normal;transform:scaleX(0.935);transform-origin:100% 0">epm20</div>
<div class="t" style="right:1348px;top:198px;font-size:15px;line-height:15px;color:#000;font-weight:normal;transform:scaleX(0.935);transform-origin:100% 0">sell</div>
<div class="t" style="right:1246px;top:198px;font-size:15px;line-height:15px;color:#000;font-weight:normal;transform:scaleX(0.935);transform-origin:100% 0">in</div>
<div class="t" style="right:1118px;top:198px;font-size:15px;line-height:15px;color:#000;font-weight:normal;transform:scaleX(0.935);transform-origin:100% 0">1.00</div>
<div class="t" style="right:990px;top:198px;font-size:15px;line-height:15px;color:#000;font-weight:normal;transform:scaleX(0.935);transform-origin:100% 0">2914.50</div>
<div class="t" style="right:862px;top:198px;font-size:15px;line-height:15px;color:#000;font-weight:normal;transform:scaleX(0.935);transform-origin:100% 0">2918.25</div>
<div class="t" style="right:734px;top:198px;font-size:15px;line-height:15px;color:#000;font-weight:normal;transform:scaleX(0.935);transform-origin:100% 0">2911.25</div>
<div class="t" style="right:632px;top:198px;font-size:15px;line-height:15px;color:#000;font-weight:normal;transform:scaleX(0.935);transform-origin:100% 0">-1.85</div>
<div class="t" style="right:32px;top:198px;font-size:15px;line-height:15px;color:#000;font-weight:normal;transform:scaleX(0.965);transform-origin:100% 0">VirtualTradePad</div>
<div class="a" style="left:21px;top:218px;width:1872px;height:24px;background:#ffffff"></div>
<div class="a" style="left:21px;top:242px;width:1872px;height:1px;background:#c8c8c8"></div>
<div class="a" style="left:23px;top:219px"><svg width="16" height="21" viewBox="0 0 16 21"><defs><linearGradient id="gbuyout" x1="0" y1="0" x2="0" y2="1"><stop offset="0.35" stop-color="#fff"/><stop offset="1" stop-color="#c9def6"/></linearGradient></defs><path d="M2.5 0.8H13.2Q15.2 0.8 15.2 2.8V14.3L9.5 20.2H2.5Q0.8 20.2 0.8 18.2V2.8Q0.8 0.8 2.5 0.8Z" fill="url(#gbuyout)" stroke="#3a8fd1" stroke-width="1.6"/><path d="M15.2 14.3L9.5 20.2V14.3Z" fill="#1f6fb8"/><path d="M13 4.6H7V1.6L2.7 5.6L7 9.6V6.6H13Z" fill="#2e5fc8"/></svg></div>
<div class="t" style="left:48px;top:223px;font-size:15px;line-height:15px;color:#000;font-weight:normal;transform:scaleX(0.935);transform-origin:0 0">2020.05.08 16:17:33</div>
<div class="t" style="right:1615px;top:223px;font-size:15px;line-height:15px;color:#000;font-weight:normal;transform:scaleX(0.935);transform-origin:100% 0">38724270</div>
<div class="t" style="right:1526px;top:223px;font-size:15px;line-height:15px;color:#000;font-weight:normal;transform:scaleX(0.935);transform-origin:100% 0">53905302</div>
<div class="t" style="right:1424px;top:223px;font-size:15px;line-height:15px;color:#000;font-weight:normal;transform:scaleX(0.935);transform-origin:100% 0">epm20</div>
<div class="t" style="right:1348px;top:223px;font-size:15px;line-height:15px;color:#000;font-weight:normal;transform:scaleX(0.935);transform-origin:100% 0">buy</div>
<div class="t" style="right:1246px;top:223px;font-size:15px;line-height:15px;color:#000;font-weight:normal;transform:scaleX(0.935);transform-origin:100% 0">out</div>
<div class="t" style="right:1118px;top:223px;font-size:15px;line-height:15px;color:#000;font-weight:normal;transform:scaleX(0.935);transform-origin:100% 0">1.00</div>
<div class="t" style="right:990px;top:223px;font-size:15px;line-height:15px;color:#000;font-weight:normal;transform:scaleX(0.935);transform-origin:100% 0">2912.25</div>
<div class="t" style="right:862px;top:223px;font-size:15px;line-height:15px;color:#000;font-weight:normal;transform:scaleX(0.935);transform-origin:100% 0">2918.25</div>
<div class="t" style="right:734px;top:223px;font-size:15px;line-height:15px;color:#000;font-weight:normal;transform:scaleX(0.935);transform-origin:100% 0">2911.25</div>
<div class="t" style="right:632px;top:223px;font-size:15px;line-height:15px;color:#000;font-weight:normal;transform:scaleX(0.935);transform-origin:100% 0">-1.85</div>
<div class="t" style="right:300px;top:223px;font-size:15px;line-height:15px;color:#000;font-weight:normal;transform:scaleX(0.935);transform-origin:100% 0">112.50</div>
<div class="a" style="left:21px;top:243px;width:1872px;height:24px;background:#ebebeb"></div>
<div class="a" style="left:21px;top:267px;width:1872px;height:1px;background:#c8c8c8"></div>
<div class="a" style="left:23px;top:244px"><svg width="16" height="21" viewBox="0 0 16 21"><defs><linearGradient id="gsellin" x1="0" y1="0" x2="0" y2="1"><stop offset="0.35" stop-color="#fff"/><stop offset="1" stop-color="#fbd3c6"/></linearGradient></defs><path d="M2.5 0.8H13.2Q15.2 0.8 15.2 2.8V14.3L9.5 20.2H2.5Q0.8 20.2 0.8 18.2V2.8Q0.8 0.8 2.5 0.8Z" fill="url(#gsellin)" stroke="#e4572e" stroke-width="1.6"/><path d="M15.2 14.3L9.5 20.2V14.3Z" fill="#d63a10"/><path d="M3 4.6H9V1.6L13.3 5.6L9 9.6V6.6H3Z" fill="#d23c16"/></svg></div>
<div class="t" style="left:48px;top:248px;font-size:15px;line-height:15px;color:#000;font-weight:normal;transform:scaleX(0.935);transform-origin:0 0">2020.05.08 17:06:33</div>
<div class="t" style="right:1615px;top:248px;font-size:15px;line-height:15px;color:#000;font-weight:normal;transform:scaleX(0.935);transform-origin:100% 0">38729033</div>
<div class="t" style="right:1526px;top:248px;font-size:15px;line-height:15px;color:#000;font-weight:normal;transform:scaleX(0.935);transform-origin:100% 0">53911717</div>
<div class="t" style="right:1424px;top:248px;font-size:15px;line-height:15px;color:#000;font-weight:normal;transform:scaleX(0.935);transform-origin:100% 0">epm20</div>
<div class="t" style="right:1348px;top:248px;font-size:15px;line-height:15px;color:#000;font-weight:normal;transform:scaleX(0.935);transform-origin:100% 0">sell</div>
<div class="t" style="right:1246px;top:248px;font-size:15px;line-height:15px;color:#000;font-weight:normal;transform:scaleX(0.935);transform-origin:100% 0">in</div>
<div class="t" style="right:1118px;top:248px;font-size:15px;line-height:15px;color:#000;font-weight:normal;transform:scaleX(0.935);transform-origin:100% 0">1.00</div>
<div class="t" style="right:990px;top:248px;font-size:15px;line-height:15px;color:#000;font-weight:normal;transform:scaleX(0.935);transform-origin:100% 0">2913.50</div>
<div class="t" style="right:862px;top:248px;font-size:15px;line-height:15px;color:#000;font-weight:normal;transform:scaleX(0.935);transform-origin:100% 0">2917.50</div>
<div class="t" style="right:734px;top:248px;font-size:15px;line-height:15px;color:#000;font-weight:normal;transform:scaleX(0.935);transform-origin:100% 0">2910.50</div>
<div class="t" style="right:632px;top:248px;font-size:15px;line-height:15px;color:#000;font-weight:normal;transform:scaleX(0.935);transform-origin:100% 0">-1.85</div>
<div class="t" style="right:32px;top:248px;font-size:15px;line-height:15px;color:#000;font-weight:normal;transform:scaleX(0.965);transform-origin:100% 0">VirtualTradePad</div>
<div class="a" style="left:21px;top:268px;width:1872px;height:24px;background:#ffffff"></div>
<div class="a" style="left:21px;top:292px;width:1872px;height:1px;background:#c8c8c8"></div>
<div class="a" style="left:23px;top:269px"><svg width="16" height="21" viewBox="0 0 16 21"><defs><linearGradient id="gbuyout" x1="0" y1="0" x2="0" y2="1"><stop offset="0.35" stop-color="#fff"/><stop offset="1" stop-color="#c9def6"/></linearGradient></defs><path d="M2.5 0.8H13.2Q15.2 0.8 15.2 2.8V14.3L9.5 20.2H2.5Q0.8 20.2 0.8 18.2V2.8Q0.8 0.8 2.5 0.8Z" fill="url(#gbuyout)" stroke="#3a8fd1" stroke-width="1.6"/><path d="M15.2 14.3L9.5 20.2V14.3Z" fill="#1f6fb8"/><path d="M13 4.6H7V1.6L2.7 5.6L7 9.6V6.6H13Z" fill="#2e5fc8"/></svg></div>
<div class="t" style="left:48px;top:273px;font-size:15px;line-height:15px;color:#000;font-weight:normal;transform:scaleX(0.935);transform-origin:0 0">2020.05.08 17:07:32</div>
<div class="t" style="right:1615px;top:273px;font-size:15px;line-height:15px;color:#000;font-weight:normal;transform:scaleX(0.935);transform-origin:100% 0">38729203</div>
<div class="t" style="right:1526px;top:273px;font-size:15px;line-height:15px;color:#000;font-weight:normal;transform:scaleX(0.935);transform-origin:100% 0">53911963</div>
<div class="t" style="right:1424px;top:273px;font-size:15px;line-height:15px;color:#000;font-weight:normal;transform:scaleX(0.935);transform-origin:100% 0">epm20</div>
<div class="t" style="right:1348px;top:273px;font-size:15px;line-height:15px;color:#000;font-weight:normal;transform:scaleX(0.935);transform-origin:100% 0">buy</div>
<div class="t" style="right:1246px;top:273px;font-size:15px;line-height:15px;color:#000;font-weight:normal;transform:scaleX(0.935);transform-origin:100% 0">out</div>
<div class="t" style="right:1118px;top:273px;font-size:15px;line-height:15px;color:#000;font-weight:normal;transform:scaleX(0.935);transform-origin:100% 0">1.00</div>
<div class="t" style="right:990px;top:273px;font-size:15px;line-height:15px;color:#000;font-weight:normal;transform:scaleX(0.935);transform-origin:100% 0">2912.75</div>
<div class="t" style="right:862px;top:273px;font-size:15px;line-height:15px;color:#000;font-weight:normal;transform:scaleX(0.935);transform-origin:100% 0">2917.50</div>
<div class="t" style="right:734px;top:273px;font-size:15px;line-height:15px;color:#000;font-weight:normal;transform:scaleX(0.935);transform-origin:100% 0">2910.50</div>
<div class="t" style="right:632px;top:273px;font-size:15px;line-height:15px;color:#000;font-weight:normal;transform:scaleX(0.935);transform-origin:100% 0">-1.85</div>
<div class="t" style="right:300px;top:273px;font-size:15px;line-height:15px;color:#000;font-weight:normal;transform:scaleX(0.935);transform-origin:100% 0">37.50</div>
<div class="a" style="left:21px;top:293px;width:1872px;height:24px;background:#ebebeb"></div>
<div class="a" style="left:21px;top:317px;width:1872px;height:1px;background:#c8c8c8"></div>
<div class="a" style="left:23px;top:294px"><svg width="16" height="21" viewBox="0 0 16 21"><defs><linearGradient id="gsellin" x1="0" y1="0" x2="0" y2="1"><stop offset="0.35" stop-color="#fff"/><stop offset="1" stop-color="#fbd3c6"/></linearGradient></defs><path d="M2.5 0.8H13.2Q15.2 0.8 15.2 2.8V14.3L9.5 20.2H2.5Q0.8 20.2 0.8 18.2V2.8Q0.8 0.8 2.5 0.8Z" fill="url(#gsellin)" stroke="#e4572e" stroke-width="1.6"/><path d="M15.2 14.3L9.5 20.2V14.3Z" fill="#d63a10"/><path d="M3 4.6H9V1.6L13.3 5.6L9 9.6V6.6H3Z" fill="#d23c16"/></svg></div>
<div class="t" style="left:48px;top:298px;font-size:15px;line-height:15px;color:#000;font-weight:normal;transform:scaleX(0.935);transform-origin:0 0">2020.05.13 08:53:35</div>
<div class="t" style="right:1615px;top:298px;font-size:15px;line-height:15px;color:#000;font-weight:normal;transform:scaleX(0.935);transform-origin:100% 0">39082848</div>
<div class="t" style="right:1526px;top:298px;font-size:15px;line-height:15px;color:#000;font-weight:normal;transform:scaleX(0.935);transform-origin:100% 0">54458228</div>
<div class="t" style="right:1424px;top:298px;font-size:15px;line-height:15px;color:#000;font-weight:normal;transform:scaleX(0.935);transform-origin:100% 0">epm20</div>
<div class="t" style="right:1348px;top:298px;font-size:15px;line-height:15px;color:#000;font-weight:normal;transform:scaleX(0.935);transform-origin:100% 0">sell</div>
<div class="t" style="right:1246px;top:298px;font-size:15px;line-height:15px;color:#000;font-weight:normal;transform:scaleX(0.935);transform-origin:100% 0">in</div>
<div class="t" style="right:1118px;top:298px;font-size:15px;line-height:15px;color:#000;font-weight:normal;transform:scaleX(0.935);transform-origin:100% 0">1.00</div>
<div class="t" style="right:990px;top:298px;font-size:15px;line-height:15px;color:#000;font-weight:normal;transform:scaleX(0.935);transform-origin:100% 0">2854.25</div>
<div class="t" style="right:862px;top:298px;font-size:15px;line-height:15px;color:#000;font-weight:normal;transform:scaleX(0.935);transform-origin:100% 0">2858.25</div>
<div class="t" style="right:734px;top:298px;font-size:15px;line-height:15px;color:#000;font-weight:normal;transform:scaleX(0.935);transform-origin:100% 0">2851.25</div>
<div class="t" style="right:632px;top:298px;font-size:15px;line-height:15px;color:#000;font-weight:normal;transform:scaleX(0.935);transform-origin:100% 0">-1.85</div>
<div class="t" style="right:32px;top:298px;font-size:15px;line-height:15px;color:#000;font-weight:normal;transform:scaleX(0.965);transform-origin:100% 0">VirtualTradePad</div>
<div class="a" style="left:21px;top:318px;width:1872px;height:24px;background:#ffffff"></div>
<div class="a" style="left:21px;top:342px;width:1872px;height:1px;background:#c8c8c8"></div>
<div class="a" style="left:23px;top:319px"><svg width="16" height="21" viewBox="0 0 16 21"><defs><linearGradient id="gbuyout" x1="0" y1="0" x2="0" y2="1"><stop offset="0.35" stop-color="#fff"/><stop offset="1" stop-color="#c9def6"/></linearGradient></defs><path d="M2.5 0.8H13.2Q15.2 0.8 15.2 2.8V14.3L9.5 20.2H2.5Q0.8 20.2 0.8 18.2V2.8Q0.8 0.8 2.5 0.8Z" fill="url(#gbuyout)" stroke="#3a8fd1" stroke-width="1.6"/><path d="M15.2 14.3L9.5 20.2V14.3Z" fill="#1f6fb8"/><path d="M13 4.6H7V1.6L2.7 5.6L7 9.6V6.6H13Z" fill="#2e5fc8"/></svg></div>
<div class="t" style="left:48px;top:323px;font-size:15px;line-height:15px;color:#000;font-weight:normal;transform:scaleX(0.935);transform-origin:0 0">2020.05.13 08:54:54</div>
<div class="t" style="right:1615px;top:323px;font-size:15px;line-height:15px;color:#000;font-weight:normal;transform:scaleX(0.935);transform-origin:100% 0">39082983</div>
<div class="t" style="right:1526px;top:323px;font-size:15px;line-height:15px;color:#000;font-weight:normal;transform:scaleX(0.935);transform-origin:100% 0">54458389</div>
<div class="t" style="right:1424px;top:323px;font-size:15px;line-height:15px;color:#000;font-weight:normal;transform:scaleX(0.935);transform-origin:100% 0">epm20</div>
<div class="t" style="right:1348px;top:323px;font-size:15px;line-height:15px;color:#000;font-weight:normal;transform:scaleX(0.935);transform-origin:100% 0">buy</div>
<div class="t" style="right:1246px;top:323px;font-size:15px;line-height:15px;color:#000;font-weight:normal;transform:scaleX(0.935);transform-origin:100% 0">out</div>
<div class="t" style="right:1118px;top:323px;font-size:15px;line-height:15px;color:#000;font-weight:normal;transform:scaleX(0.935);transform-origin:100% 0">1.00</div>
<div class="t" style="right:990px;top:323px;font-size:15px;line-height:15px;color:#000;font-weight:normal;transform:scaleX(0.935);transform-origin:100% 0">2853.00</div>
<div class="t" style="right:862px;top:323px;font-size:15px;line-height:15px;color:#000;font-weight:normal;transform:scaleX(0.935);transform-origin:100% 0">2858.25</div>
<div class="t" style="right:734px;top:323px;font-size:15px;line-height:15px;color:#000;font-weight:normal;transform:scaleX(0.935);transform-origin:100% 0">2851.25</div>
<div class="t" style="right:632px;top:323px;font-size:15px;line-height:15px;color:#000;font-weight:normal;transform:scaleX(0.935);transform-origin:100% 0">-1.85</div>
<div class="t" style="right:300px;top:323px;font-size:15px;line-height:15px;color:#000;font-weight:normal;transform:scaleX(0.935);transform-origin:100% 0">62.50</div>
<div class="a" style="left:21px;top:343px;width:1872px;height:24px;background:#ebebeb"></div>
<div class="a" style="left:21px;top:367px;width:1872px;height:1px;background:#c8c8c8"></div>
<div class="a" style="left:23px;top:344px"><svg width="16" height="21" viewBox="0 0 16 21"><defs><linearGradient id="gsellin" x1="0" y1="0" x2="0" y2="1"><stop offset="0.35" stop-color="#fff"/><stop offset="1" stop-color="#fbd3c6"/></linearGradient></defs><path d="M2.5 0.8H13.2Q15.2 0.8 15.2 2.8V14.3L9.5 20.2H2.5Q0.8 20.2 0.8 18.2V2.8Q0.8 0.8 2.5 0.8Z" fill="url(#gsellin)" stroke="#e4572e" stroke-width="1.6"/><path d="M15.2 14.3L9.5 20.2V14.3Z" fill="#d63a10"/><path d="M3 4.6H9V1.6L13.3 5.6L9 9.6V6.6H3Z" fill="#d23c16"/></svg></div>
<div class="t" style="left:48px;top:348px;font-size:15px;line-height:15px;color:#000;font-weight:normal;transform:scaleX(0.935);transform-origin:0 0">2020.05.13 08:57:03</div>
<div class="t" style="right:1615px;top:348px;font-size:15px;line-height:15px;color:#000;font-weight:normal;transform:scaleX(0.935);transform-origin:100% 0">39083139</div>
<div class="t" style="right:1526px;top:348px;font-size:15px;line-height:15px;color:#000;font-weight:normal;transform:scaleX(0.935);transform-origin:100% 0">54458579</div>
<div class="t" style="right:1424px;top:348px;font-size:15px;line-height:15px;color:#000;font-weight:normal;transform:scaleX(0.935);transform-origin:100% 0">epm20</div>
<div class="t" style="right:1348px;top:348px;font-size:15px;line-height:15px;color:#000;font-weight:normal;transform:scaleX(0.935);transform-origin:100% 0">sell</div>
<div class="t" style="right:1246px;top:348px;font-size:15px;line-height:15px;color:#000;font-weight:normal;transform:scaleX(0.935);transform-origin:100% 0">in</div>
<div class="t" style="right:1118px;top:348px;font-size:15px;line-height:15px;color:#000;font-weight:normal;transform:scaleX(0.935);transform-origin:100% 0">1.00</div>
<div class="t" style="right:990px;top:348px;font-size:15px;line-height:15px;color:#000;font-weight:normal;transform:scaleX(0.935);transform-origin:100% 0">2851.25</div>
<div class="t" style="right:862px;top:348px;font-size:15px;line-height:15px;color:#000;font-weight:normal;transform:scaleX(0.935);transform-origin:100% 0">2855.25</div>
<div class="t" style="right:734px;top:348px;font-size:15px;line-height:15px;color:#000;font-weight:normal;transform:scaleX(0.935);transform-origin:100% 0">2848.25</div>
<div class="t" style="right:632px;top:348px;font-size:15px;line-height:15px;color:#000;font-weight:normal;transform:scaleX(0.935);transform-origin:100% 0">-1.85</div>
<div class="t" style="right:32px;top:348px;font-size:15px;line-height:15px;color:#000;font-weight:normal;transform:scaleX(0.965);transform-origin:100% 0">VirtualTradePad</div>
<div class="a" style="left:21px;top:368px;width:1872px;height:24px;background:#ffffff"></div>
<div class="a" style="left:21px;top:392px;width:1872px;height:1px;background:#c8c8c8"></div>
<div class="a" style="left:23px;top:369px"><svg width="16" height="21" viewBox="0 0 16 21"><defs><linearGradient id="gbuyout" x1="0" y1="0" x2="0" y2="1"><stop offset="0.35" stop-color="#fff"/><stop offset="1" stop-color="#c9def6"/></linearGradient></defs><path d="M2.5 0.8H13.2Q15.2 0.8 15.2 2.8V14.3L9.5 20.2H2.5Q0.8 20.2 0.8 18.2V2.8Q0.8 0.8 2.5 0.8Z" fill="url(#gbuyout)" stroke="#3a8fd1" stroke-width="1.6"/><path d="M15.2 14.3L9.5 20.2V14.3Z" fill="#1f6fb8"/><path d="M13 4.6H7V1.6L2.7 5.6L7 9.6V6.6H13Z" fill="#2e5fc8"/></svg></div>
<div class="t" style="left:48px;top:373px;font-size:15px;line-height:15px;color:#000;font-weight:normal;transform:scaleX(0.935);transform-origin:0 0">2020.05.13 09:00:17</div>
<div class="t" style="right:1615px;top:373px;font-size:15px;line-height:15px;color:#000;font-weight:normal;transform:scaleX(0.935);transform-origin:100% 0">39083297</div>
<div class="t" style="right:1526px;top:373px;font-size:15px;line-height:15px;color:#000;font-weight:normal;transform:scaleX(0.935);transform-origin:100% 0">54458816</div>
<div class="t" style="right:1424px;top:373px;font-size:15px;line-height:15px;color:#000;font-weight:normal;transform:scaleX(0.935);transform-origin:100% 0">epm20</div>
<div class="t" style="right:1348px;top:373px;font-size:15px;line-height:15px;color:#000;font-weight:normal;transform:scaleX(0.935);transform-origin:100% 0">buy</div>
<div class="t" style="right:1246px;top:373px;font-size:15px;line-height:15px;color:#000;font-weight:normal;transform:scaleX(0.935);transform-origin:100% 0">out</div>
<div class="t" style="right:1118px;top:373px;font-size:15px;line-height:15px;color:#000;font-weight:normal;transform:scaleX(0.935);transform-origin:100% 0">1.00</div>
<div class="t" style="right:990px;top:373px;font-size:15px;line-height:15px;color:#000;font-weight:normal;transform:scaleX(0.935);transform-origin:100% 0">2850.25</div>
<div class="t" style="right:862px;top:373px;font-size:15px;line-height:15px;color:#000;font-weight:normal;transform:scaleX(0.935);transform-origin:100% 0">2855.25</div>
<div class="t" style="right:734px;top:373px;font-size:15px;line-height:15px;color:#000;font-weight:normal;transform:scaleX(0.935);transform-origin:100% 0">2848.25</div>
<div class="t" style="right:632px;top:373px;font-size:15px;line-height:15px;color:#000;font-weight:normal;transform:scaleX(0.935);transform-origin:100% 0">-1.85</div>
<div class="t" style="right:300px;top:373px;font-size:15px;line-height:15px;color:#000;font-weight:normal;transform:scaleX(0.935);transform-origin:100% 0">50.00</div>
<div class="a" style="left:21px;top:393px;width:1872px;height:24px;background:#ebebeb"></div>
<div class="a" style="left:21px;top:417px;width:1872px;height:1px;background:#c8c8c8"></div>
<div class="a" style="left:23px;top:394px"><svg width="16" height="21" viewBox="0 0 16 21"><defs><linearGradient id="gsellin" x1="0" y1="0" x2="0" y2="1"><stop offset="0.35" stop-color="#fff"/><stop offset="1" stop-color="#fbd3c6"/></linearGradient></defs><path d="M2.5 0.8H13.2Q15.2 0.8 15.2 2.8V14.3L9.5 20.2H2.5Q0.8 20.2 0.8 18.2V2.8Q0.8 0.8 2.5 0.8Z" fill="url(#gsellin)" stroke="#e4572e" stroke-width="1.6"/><path d="M15.2 14.3L9.5 20.2V14.3Z" fill="#d63a10"/><path d="M3 4.6H9V1.6L13.3 5.6L9 9.6V6.6H3Z" fill="#d23c16"/></svg></div>
<div class="t" style="left:48px;top:398px;font-size:15px;line-height:15px;color:#000;font-weight:normal;transform:scaleX(0.935);transform-origin:0 0">2020.05.13 09:03:29</div>
<div class="t" style="right:1615px;top:398px;font-size:15px;line-height:15px;color:#000;font-weight:normal;transform:scaleX(0.935);transform-origin:100% 0">39083532</div>
<div class="t" style="right:1526px;top:398px;font-size:15px;line-height:15px;color:#000;font-weight:normal;transform:scaleX(0.935);transform-origin:100% 0">54459109</div>
<div class="t" style="right:1424px;top:398px;font-size:15px;line-height:15px;color:#000;font-weight:normal;transform:scaleX(0.935);transform-origin:100% 0">epm20</div>
<div class="t" style="right:1348px;top:398px;font-size:15px;line-height:15px;color:#000;font-weight:normal;transform:scaleX(0.935);transform-origin:100% 0">sell</div>
<div class="t" style="right:1246px;top:398px;font-size:15px;line-height:15px;color:#000;font-weight:normal;transform:scaleX(0.935);transform-origin:100% 0">in</div>
<div class="t" style="right:1118px;top:398px;font-size:15px;line-height:15px;color:#000;font-weight:normal;transform:scaleX(0.935);transform-origin:100% 0">1.00</div>
<div class="t" style="right:990px;top:398px;font-size:15px;line-height:15px;color:#000;font-weight:normal;transform:scaleX(0.935);transform-origin:100% 0">2849.50</div>
<div class="t" style="right:862px;top:398px;font-size:15px;line-height:15px;color:#000;font-weight:normal;transform:scaleX(0.935);transform-origin:100% 0">2853.25</div>
<div class="t" style="right:734px;top:398px;font-size:15px;line-height:15px;color:#000;font-weight:normal;transform:scaleX(0.935);transform-origin:100% 0">2846.25</div>
<div class="t" style="right:632px;top:398px;font-size:15px;line-height:15px;color:#000;font-weight:normal;transform:scaleX(0.935);transform-origin:100% 0">-1.85</div>
<div class="t" style="right:32px;top:398px;font-size:15px;line-height:15px;color:#000;font-weight:normal;transform:scaleX(0.965);transform-origin:100% 0">VirtualTradePad</div>
<div class="a" style="left:21px;top:418px;width:1872px;height:24px;background:#ffffff"></div>
<div class="a" style="left:21px;top:442px;width:1872px;height:1px;background:#c8c8c8"></div>
<div class="a" style="left:23px;top:419px"><svg width="16" height="21" viewBox="0 0 16 21"><defs><linearGradient id="gbuyout" x1="0" y1="0" x2="0" y2="1"><stop offset="0.35" stop-color="#fff"/><stop offset="1" stop-color="#c9def6"/></linearGradient></defs><path d="M2.5 0.8H13.2Q15.2 0.8 15.2 2.8V14.3L9.5 20.2H2.5Q0.8 20.2 0.8 18.2V2.8Q0.8 0.8 2.5 0.8Z" fill="url(#gbuyout)" stroke="#3a8fd1" stroke-width="1.6"/><path d="M15.2 14.3L9.5 20.2V14.3Z" fill="#1f6fb8"/><path d="M13 4.6H7V1.6L2.7 5.6L7 9.6V6.6H13Z" fill="#2e5fc8"/></svg></div>
<div class="t" style="left:48px;top:423px;font-size:15px;line-height:15px;color:#000;font-weight:normal;transform:scaleX(0.935);transform-origin:0 0">2020.05.13 09:04:47</div>
<div class="t" style="right:1615px;top:423px;font-size:15px;line-height:15px;color:#000;font-weight:normal;transform:scaleX(0.935);transform-origin:100% 0">39083589</div>
<div class="t" style="right:1526px;top:423px;font-size:15px;line-height:15px;color:#000;font-weight:normal;transform:scaleX(0.935);transform-origin:100% 0">54459197</div>
<div class="t" style="right:1424px;top:423px;font-size:15px;line-height:15px;color:#000;font-weight:normal;transform:scaleX(0.935);transform-origin:100% 0">epm20</div>
<div class="t" style="right:1348px;top:423px;font-size:15px;line-height:15px;color:#000;font-weight:normal;transform:scaleX(0.935);transform-origin:100% 0">buy</div>
<div class="t" style="right:1246px;top:423px;font-size:15px;line-height:15px;color:#000;font-weight:normal;transform:scaleX(0.935);transform-origin:100% 0">out</div>
<div class="t" style="right:1118px;top:423px;font-size:15px;line-height:15px;color:#000;font-weight:normal;transform:scaleX(0.935);transform-origin:100% 0">1.00</div>
<div class="t" style="right:990px;top:423px;font-size:15px;line-height:15px;color:#000;font-weight:normal;transform:scaleX(0.935);transform-origin:100% 0">2849.75</div>
<div class="t" style="right:862px;top:423px;font-size:15px;line-height:15px;color:#000;font-weight:normal;transform:scaleX(0.935);transform-origin:100% 0">2853.25</div>
<div class="t" style="right:734px;top:423px;font-size:15px;line-height:15px;color:#000;font-weight:normal;transform:scaleX(0.935);transform-origin:100% 0">2846.25</div>
<div class="t" style="right:632px;top:423px;font-size:15px;line-height:15px;color:#000;font-weight:normal;transform:scaleX(0.935);transform-origin:100% 0">-1.85</div>
<div class="t" style="right:300px;top:423px;font-size:15px;line-height:15px;color:#000;font-weight:normal;transform:scaleX(0.935);transform-origin:100% 0">-12.50</div>
<div class="a" style="left:21px;top:443px;width:1872px;height:24px;background:#ebebeb"></div>
<div class="a" style="left:21px;top:467px;width:1872px;height:1px;background:#c8c8c8"></div>
<div class="a" style="left:23px;top:444px"><svg width="16" height="21" viewBox="0 0 16 21"><defs><linearGradient id="gbuyin" x1="0" y1="0" x2="0" y2="1"><stop offset="0.35" stop-color="#fff"/><stop offset="1" stop-color="#c9def6"/></linearGradient></defs><path d="M2.5 0.8H13.2Q15.2 0.8 15.2 2.8V14.3L9.5 20.2H2.5Q0.8 20.2 0.8 18.2V2.8Q0.8 0.8 2.5 0.8Z" fill="url(#gbuyin)" stroke="#3a8fd1" stroke-width="1.6"/><path d="M15.2 14.3L9.5 20.2V14.3Z" fill="#1f6fb8"/><path d="M3 4.6H9V1.6L13.3 5.6L9 9.6V6.6H3Z" fill="#2e5fc8"/></svg></div>
<div class="t" style="left:48px;top:448px;font-size:15px;line-height:15px;color:#000;font-weight:normal;transform:scaleX(0.935);transform-origin:0 0">2020.05.13 09:06:12</div>
<div class="t" style="right:1615px;top:448px;font-size:15px;line-height:15px;color:#000;font-weight:normal;transform:scaleX(0.935);transform-origin:100% 0">39083742</div>
<div class="t" style="right:1526px;top:448px;font-size:15px;line-height:15px;color:#000;font-weight:normal;transform:scaleX(0.935);transform-origin:100% 0">54459386</div>
<div class="t" style="right:1424px;top:448px;font-size:15px;line-height:15px;color:#000;font-weight:normal;transform:scaleX(0.935);transform-origin:100% 0">epm20</div>
<div class="t" style="right:1348px;top:448px;font-size:15px;line-height:15px;color:#000;font-weight:normal;transform:scaleX(0.935);transform-origin:100% 0">buy</div>
<div class="t" style="right:1246px;top:448px;font-size:15px;line-height:15px;color:#000;font-weight:normal;transform:scaleX(0.935);transform-origin:100% 0">in</div>
<div class="t" style="right:1118px;top:448px;font-size:15px;line-height:15px;color:#000;font-weight:normal;transform:scaleX(0.935);transform-origin:100% 0">1.00</div>
<div class="t" style="right:990px;top:448px;font-size:15px;line-height:15px;color:#000;font-weight:normal;transform:scaleX(0.935);transform-origin:100% 0">2852.25</div>
<div class="t" style="right:862px;top:448px;font-size:15px;line-height:15px;color:#000;font-weight:normal;transform:scaleX(0.935);transform-origin:100% 0">2848.50</div>
<div class="t" style="right:734px;top:448px;font-size:15px;line-height:15px;color:#000;font-weight:normal;transform:scaleX(0.935);transform-origin:100% 0">2855.50</div>
<div class="t" style="right:632px;top:448px;font-size:15px;line-height:15px;color:#000;font-weight:normal;transform:scaleX(0.935);transform-origin:100% 0">-1.85</div>
<div class="t" style="right:32px;top:448px;font-size:15px;line-height:15px;color:#000;font-weight:normal;transform:scaleX(0.965);transform-origin:100% 0">VirtualTradePad</div>
<div class="a" style="left:21px;top:468px;width:1872px;height:24px;background:#ffffff"></div>
<div class="a" style="left:21px;top:492px;width:1872px;height:1px;background:#c8c8c8"></div>
<div class="a" style="left:23px;top:469px"><svg width="16" height="21" viewBox="0 0 16 21"><defs><linearGradient id="gsellout" x1="0" y1="0" x2="0" y2="1"><stop offset="0.35" stop-color="#fff"/><stop offset="1" stop-color="#fbd3c6"/></linearGradient></defs><path d="M2.5 0.8H13.2Q15.2 0.8 15.2 2.8V14.3L9.5 20.2H2.5Q0.8 20.2 0.8 18.2V2.8Q0.8 0.8 2.5 0.8Z" fill="url(#gsellout)" stroke="#e4572e" stroke-width="1.6"/><path d="M15.2 14.3L9.5 20.2V14.3Z" fill="#d63a10"/><path d="M13 4.6H7V1.6L2.7 5.6L7 9.6V6.6H13Z" fill="#d23c16"/></svg></div>
<div class="t" style="left:48px;top:473px;font-size:15px;line-height:15px;color:#000;font-weight:normal;transform:scaleX(0.935);transform-origin:0 0">2020.05.13 09:07:10</div>
<div class="t" style="right:1615px;top:473px;font-size:15px;line-height:15px;color:#000;font-weight:normal;transform:scaleX(0.935);transform-origin:100% 0">39083768</div>
<div class="t" style="right:1526px;top:473px;font-size:15px;line-height:15px;color:#000;font-weight:normal;transform:scaleX(0.935);transform-origin:100% 0">54459438</div>
<div class="t" style="right:1424px;top:473px;font-size:15px;line-height:15px;color:#000;font-weight:normal;transform:scaleX(0.935);transform-origin:100% 0">epm20</div>
<div class="t" style="right:1348px;top:473px;font-size:15px;line-height:15px;color:#000;font-weight:normal;transform:scaleX(0.935);transform-origin:100% 0">sell</div>
<div class="t" style="right:1246px;top:473px;font-size:15px;line-height:15px;color:#000;font-weight:normal;transform:scaleX(0.935);transform-origin:100% 0">out</div>
<div class="t" style="right:1118px;top:473px;font-size:15px;line-height:15px;color:#000;font-weight:normal;transform:scaleX(0.935);transform-origin:100% 0">1.00</div>
<div class="t" style="right:990px;top:473px;font-size:15px;line-height:15px;color:#000;font-weight:normal;transform:scaleX(0.935);transform-origin:100% 0">2853.00</div>
<div class="t" style="right:862px;top:473px;font-size:15px;line-height:15px;color:#000;font-weight:normal;transform:scaleX(0.935);transform-origin:100% 0">2852.50</div>
<div class="t" style="right:734px;top:473px;font-size:15px;line-height:15px;color:#000;font-weight:normal;transform:scaleX(0.935);transform-origin:100% 0">2855.50</div>
<div class="t" style="right:632px;top:473px;font-size:15px;line-height:15px;color:#000;font-weight:normal;transform:scaleX(0.935);transform-origin:100% 0">-1.85</div>
<div class="t" style="right:300px;top:473px;font-size:15px;line-height:15px;color:#000;font-weight:normal;transform:scaleX(0.935);transform-origin:100% 0">37.50</div>
<div class="a" style="left:21px;top:493px;width:1872px;height:24px;background:#ebebeb"></div>
<div class="a" style="left:21px;top:517px;width:1872px;height:1px;background:#c8c8c8"></div>
<div class="a" style="left:23px;top:494px"><svg width="16" height="21" viewBox="0 0 16 21"><defs><linearGradient id="gbuyin" x1="0" y1="0" x2="0" y2="1"><stop offset="0.35" stop-color="#fff"/><stop offset="1" stop-color="#c9def6"/></linearGradient></defs><path d="M2.5 0.8H13.2Q15.2 0.8 15.2 2.8V14.3L9.5 20.2H2.5Q0.8 20.2 0.8 18.2V2.8Q0.8 0.8 2.5 0.8Z" fill="url(#gbuyin)" stroke="#3a8fd1" stroke-width="1.6"/><path d="M15.2 14.3L9.5 20.2V14.3Z" fill="#1f6fb8"/><path d="M3 4.6H9V1.6L13.3 5.6L9 9.6V6.6H3Z" fill="#2e5fc8"/></svg></div>
<div class="t" style="left:48px;top:498px;font-size:15px;line-height:15px;color:#000;font-weight:normal;transform:scaleX(0.935);transform-origin:0 0">2020.05.13 09:09:46</div>
<div class="t" style="right:1615px;top:498px;font-size:15px;line-height:15px;color:#000;font-weight:normal;transform:scaleX(0.935);transform-origin:100% 0">39083932</div>
<div class="t" style="right:1526px;top:498px;font-size:15px;line-height:15px;color:#000;font-weight:normal;transform:scaleX(0.935);transform-origin:100% 0">54459671</div>
<div class="t" style="right:1424px;top:498px;font-size:15px;line-height:15px;color:#000;font-weight:normal;transform:scaleX(0.935);transform-origin:100% 0">epm20</div>
<div class="t" style="right:1348px;top:498px;font-size:15px;line-height:15px;color:#000;font-weight:normal;transform:scaleX(0.935);transform-origin:100% 0">buy</div>
<div class="t" style="right:1246px;top:498px;font-size:15px;line-height:15px;color:#000;font-weight:normal;transform:scaleX(0.935);transform-origin:100% 0">in</div>
<div class="t" style="right:1118px;top:498px;font-size:15px;line-height:15px;color:#000;font-weight:normal;transform:scaleX(0.935);transform-origin:100% 0">1.00</div>
<div class="t" style="right:990px;top:498px;font-size:15px;line-height:15px;color:#000;font-weight:normal;transform:scaleX(0.935);transform-origin:100% 0">2856.00</div>
<div class="t" style="right:862px;top:498px;font-size:15px;line-height:15px;color:#000;font-weight:normal;transform:scaleX(0.935);transform-origin:100% 0">2852.00</div>
<div class="t" style="right:734px;top:498px;font-size:15px;line-height:15px;color:#000;font-weight:normal;transform:scaleX(0.935);transform-origin:100% 0">2859.00</div>
<div class="t" style="right:632px;top:498px;font-size:15px;line-height:15px;color:#000;font-weight:normal;transform:scaleX(0.935);transform-origin:100% 0">-1.85</div>
<div class="t" style="right:32px;top:498px;font-size:15px;line-height:15px;color:#000;font-weight:normal;transform:scaleX(0.965);transform-origin:100% 0">VirtualTradePad</div>
<div class="a" style="left:21px;top:518px;width:1872px;height:24px;background:#ffffff"></div>
<div class="a" style="left:21px;top:542px;width:1872px;height:1px;background:#c8c8c8"></div>
<div class="a" style="left:807px;top:518px;width:127px;height:24px;background:#ffa0a0"></div>
<div class="a" style="left:23px;top:519px"><svg width="16" height="21" viewBox="0 0 16 21"><defs><linearGradient id="gsellout" x1="0" y1="0" x2="0" y2="1"><stop offset="0.35" stop-color="#fff"/><stop offset="1" stop-color="#fbd3c6"/></linearGradient></defs><path d="M2.5 0.8H13.2Q15.2 0.8 15.2 2.8V14.3L9.5 20.2H2.5Q0.8 20.2 0.8 18.2V2.8Q0.8 0.8 2.5 0.8Z" fill="url(#gsellout)" stroke="#e4572e" stroke-width="1.6"/><path d="M15.2 14.3L9.5 20.2V14.3Z" fill="#d63a10"/><path d="M13 4.6H7V1.6L2.7 5.6L7 9.6V6.6H13Z" fill="#d23c16"/></svg></div>
<div class="t" style="left:48px;top:523px;font-size:15px;line-height:15px;color:#000;font-weight:normal;transform:scaleX(0.935);transform-origin:0 0">2020.05.13 09:10:14</div>
<div class="t" style="right:1615px;top:523px;font-size:15px;line-height:15px;color:#000;font-weight:normal;transform:scaleX(0.935);transform-origin:100% 0">39083993</div>
<div class="t" style="right:1526px;top:523px;font-size:15px;line-height:15px;color:#000;font-weight:normal;transform:scaleX(0.935);transform-origin:100% 0">54459749</div>
<div class="t" style="right:1424px;top:523px;font-size:15px;line-height:15px;color:#000;font-weight:normal;transform:scaleX(0.935);transform-origin:100% 0">epm20</div>
<div class="t" style="right:1348px;top:523px;font-size:15px;line-height:15px;color:#000;font-weight:normal;transform:scaleX(0.935);transform-origin:100% 0">sell</div>
<div class="t" style="right:1246px;top:523px;font-size:15px;line-height:15px;color:#000;font-weight:normal;transform:scaleX(0.935);transform-origin:100% 0">out</div>
<div class="t" style="right:1118px;top:523px;font-size:15px;line-height:15px;color:#000;font-weight:normal;transform:scaleX(0.935);transform-origin:100% 0">1.00</div>
<div class="t" style="right:990px;top:523px;font-size:15px;line-height:15px;color:#000;font-weight:normal;transform:scaleX(0.935);transform-origin:100% 0">2857.25</div>
<div class="t" style="right:862px;top:523px;font-size:15px;line-height:15px;color:#000;font-weight:normal;transform:scaleX(0.935);transform-origin:100% 0">2857.25</div>
<div class="t" style="right:734px;top:523px;font-size:15px;line-height:15px;color:#000;font-weight:normal;transform:scaleX(0.935);transform-origin:100% 0">2859.00</div>
<div class="t" style="right:632px;top:523px;font-size:15px;line-height:15px;color:#000;font-weight:normal;transform:scaleX(0.935);transform-origin:100% 0">-1.85</div>
<div class="t" style="right:300px;top:523px;font-size:15px;line-height:15px;color:#000;font-weight:normal;transform:scaleX(0.935);transform-origin:100% 0">62.50</div>
<div class="t" style="right:32px;top:523px;font-size:15px;line-height:15px;color:#000;font-weight:normal;transform:scaleX(0.965);transform-origin:100% 0">[sl 2857.25]</div>
<div class="a" style="left:21px;top:543px;width:1872px;height:24px;background:#ebebeb"></div>
<div class="a" style="left:21px;top:567px;width:1872px;height:1px;background:#c8c8c8"></div>
<div class="a" style="left:23px;top:544px"><svg width="16" height="21" viewBox="0 0 16 21"><defs><linearGradient id="gbuyin" x1="0" y1="0" x2="0" y2="1"><stop offset="0.35" stop-color="#fff"/><stop offset="1" stop-color="#c9def6"/></linearGradient></defs><path d="M2.5 0.8H13.2Q15.2 0.8 15.2 2.8V14.3L9.5 20.2H2.5Q0.8 20.2 0.8 18.2V2.8Q0.8 0.8 2.5 0.8Z" fill="url(#gbuyin)" stroke="#3a8fd1" stroke-width="1.6"/><path d="M15.2 14.3L9.5 20.2V14.3Z" fill="#1f6fb8"/><path d="M3 4.6H9V1.6L13.3 5.6L9 9.6V6.6H3Z" fill="#2e5fc8"/></svg></div>
<div class="t" style="left:48px;top:548px;font-size:15px;line-height:15px;color:#000;font-weight:normal;transform:scaleX(0.935);transform-origin:0 0">2020.05.13 09:17:44</div>
<div class="t" style="right:1615px;top:548px;font-size:15px;line-height:15px;color:#000;font-weight:normal;transform:scaleX(0.935);transform-origin:100% 0">39084486</div>
<div class="t" style="right:1526px;top:548px;font-size:15px;line-height:15px;color:#000;font-weight:normal;transform:scaleX(0.935);transform-origin:100% 0">54460483</div>
<div class="t" style="right:1424px;top:548px;font-size:15px;line-height:15px;color:#000;font-weight:normal;transform:scaleX(0.935);transform-origin:100% 0">epm20</div>
<div class="t" style="right:1348px;top:548px;font-size:15px;line-height:15px;color:#000;font-weight:normal;transform:scaleX(0.935);transform-origin:100% 0">buy</div>
<div class="t" style="right:1246px;top:548px;font-size:15px;line-height:15px;color:#000;font-weight:normal;transform:scaleX(0.935);transform-origin:100% 0">in</div>
<div class="t" style="right:1118px;top:548px;font-size:15px;line-height:15px;color:#000;font-weight:normal;transform:scaleX(0.935);transform-origin:100% 0">1.00</div>
<div class="t" style="right:990px;top:548px;font-size:15px;line-height:15px;color:#000;font-weight:normal;transform:scaleX(0.935);transform-origin:100% 0">2858.25</div>
<div class="t" style="right:862px;top:548px;font-size:15px;line-height:15px;color:#000;font-weight:normal;transform:scaleX(0.935);transform-origin:100% 0">2854.50</div>
<div class="t" style="right:734px;top:548px;font-size:15px;line-height:15px;color:#000;font-weight:normal;transform:scaleX(0.935);transform-origin:100% 0">2861.50</div>
<div class="t" style="right:632px;top:548px;font-size:15px;line-height:15px;color:#000;font-weight:normal;transform:scaleX(0.935);transform-origin:100% 0">-1.85</div>
<div class="t" style="right:32px;top:548px;font-size:15px;line-height:15px;color:#000;font-weight:normal;transform:scaleX(0.965);transform-origin:100% 0">VirtualTradePad</div>
<div class="a" style="left:21px;top:568px;width:1872px;height:24px;background:#ffffff"></div>
<div class="a" style="left:21px;top:592px;width:1872px;height:1px;background:#c8c8c8"></div>
<div class="a" style="left:807px;top:568px;width:127px;height:24px;background:#ffa0a0"></div>
<div class="a" style="left:23px;top:569px"><svg width="16" height="21" viewBox="0 0 16 21"><defs><linearGradient id="gsellout" x1="0" y1="0" x2="0" y2="1"><stop offset="0.35" stop-color="#fff"/><stop offset="1" stop-color="#fbd3c6"/></linearGradient></defs><path d="M2.5 0.8H13.2Q15.2 0.8 15.2 2.8V14.3L9.5 20.2H2.5Q0.8 20.2 0.8 18.2V2.8Q0.8 0.8 2.5 0.8Z" fill="url(#gsellout)" stroke="#e4572e" stroke-width="1.6"/><path d="M15.2 14.3L9.5 20.2V14.3Z" fill="#d63a10"/><path d="M13 4.6H7V1.6L2.7 5.6L7 9.6V6.6H13Z" fill="#d23c16"/></svg></div>
<div class="t" style="left:48px;top:573px;font-size:15px;line-height:15px;color:#000;font-weight:normal;transform:scaleX(0.935);transform-origin:0 0">2020.05.13 09:17:45</div>
<div class="t" style="right:1615px;top:573px;font-size:15px;line-height:15px;color:#000;font-weight:normal;transform:scaleX(0.935);transform-origin:100% 0">39084500</div>
<div class="t" style="right:1526px;top:573px;font-size:15px;line-height:15px;color:#000;font-weight:normal;transform:scaleX(0.935);transform-origin:100% 0">54460501</div>
<div class="t" style="right:1424px;top:573px;font-size:15px;line-height:15px;color:#000;font-weight:normal;transform:scaleX(0.935);transform-origin:100% 0">epm20</div>
<div class="t" style="right:1348px;top:573px;font-size:15px;line-height:15px;color:#000;font-weight:normal;transform:scaleX(0.935);transform-origin:100% 0">sell</div>
<div class="t" style="right:1246px;top:573px;font-size:15px;line-height:15px;color:#000;font-weight:normal;transform:scaleX(0.935);transform-origin:100% 0">out</div>
<div class="t" style="right:1118px;top:573px;font-size:15px;line-height:15px;color:#000;font-weight:normal;transform:scaleX(0.935);transform-origin:100% 0">1.00</div>
<div class="t" style="right:990px;top:573px;font-size:15px;line-height:15px;color:#000;font-weight:normal;transform:scaleX(0.935);transform-origin:100% 0">2858.75</div>
<div class="t" style="right:862px;top:573px;font-size:15px;line-height:15px;color:#000;font-weight:normal;transform:scaleX(0.935);transform-origin:100% 0">2858.75</div>
<div class="t" style="right:734px;top:573px;font-size:15px;line-height:15px;color:#000;font-weight:normal;transform:scaleX(0.935);transform-origin:100% 0">2861.50</div>
<div class="t" style="right:632px;top:573px;font-size:15px;line-height:15px;color:#000;font-weight:normal;transform:scaleX(0.935);transform-origin:100% 0">-1.85</div>
<div class="t" style="right:300px;top:573px;font-size:15px;line-height:15px;color:#000;font-weight:normal;transform:scaleX(0.935);transform-origin:100% 0">25.00</div>
<div class="t" style="right:32px;top:573px;font-size:15px;line-height:15px;color:#000;font-weight:normal;transform:scaleX(0.965);transform-origin:100% 0">[sl 2858.75]</div>
<div class="a" style="left:21px;top:593px;width:1872px;height:24px;background:#ebebeb"></div>
<div class="a" style="left:21px;top:617px;width:1872px;height:1px;background:#c8c8c8"></div>
<div class="a" style="left:23px;top:594px"><svg width="16" height="21" viewBox="0 0 16 21"><defs><linearGradient id="gbuyin" x1="0" y1="0" x2="0" y2="1"><stop offset="0.35" stop-color="#fff"/><stop offset="1" stop-color="#c9def6"/></linearGradient></defs><path d="M2.5 0.8H13.2Q15.2 0.8 15.2 2.8V14.3L9.5 20.2H2.5Q0.8 20.2 0.8 18.2V2.8Q0.8 0.8 2.5 0.8Z" fill="url(#gbuyin)" stroke="#3a8fd1" stroke-width="1.6"/><path d="M15.2 14.3L9.5 20.2V14.3Z" fill="#1f6fb8"/><path d="M3 4.6H9V1.6L13.3 5.6L9 9.6V6.6H3Z" fill="#2e5fc8"/></svg></div>
<div class="t" style="left:48px;top:598px;font-size:15px;line-height:15px;color:#000;font-weight:normal;transform:scaleX(0.935);transform-origin:0 0">2020.05.13 09:18:25</div>
<div class="t" style="right:1615px;top:598px;font-size:15px;line-height:15px;color:#000;font-weight:normal;transform:scaleX(0.935);transform-origin:100% 0">39084547</div>
<div class="t" style="right:1526px;top:598px;font-size:15px;line-height:15px;color:#000;font-weight:normal;transform:scaleX(0.935);transform-origin:100% 0">54460579</div>
<div class="t" style="right:1424px;top:598px;font-size:15px;line-height:15px;color:#000;font-weight:normal;transform:scaleX(0.935);transform-origin:100% 0">epm20</div>
<div class="t" style="right:1348px;top:598px;font-size:15px;line-height:15px;color:#000;font-weight:normal;transform:scaleX(0.935);transform-origin:100% 0">buy</div>
<div class="t" style="right:1246px;top:598px;font-size:15px;line-height:15px;color:#000;font-weight:normal;transform:scaleX(0.935);transform-origin:100% 0">in</div>
<div class="t" style="right:1118px;top:598px;font-size:15px;line-height:15px;color:#000;font-weight:normal;transform:scaleX(0.935);transform-origin:100% 0">1.00</div>
<div class="t" style="right:990px;top:598px;font-size:15px;line-height:15px;color:#000;font-weight:normal;transform:scaleX(0.935);transform-origin:100% 0">2859.50</div>
<div class="t" style="right:862px;top:598px;font-size:15px;line-height:15px;color:#000;font-weight:normal;transform:scaleX(0.935);transform-origin:100% 0">2855.75</div>
<div class="t" style="right:734px;top:598px;font-size:15px;line-height:15px;color:#000;font-weight:normal;transform:scaleX(0.935);transform-origin:100% 0">2862.75</div>
<div class="t" style="right:632px;top:598px;font-size:15px;line-height:15px;color:#000;font-weight:normal;transform:scaleX(0.935);transform-origin:100% 0">-1.85</div>
<div class="t" style="right:32px;top:598px;font-size:15px;line-height:15px;color:#000;font-weight:normal;transform:scaleX(0.965);transform-origin:100% 0">VirtualTradePad</div>
<div class="a" style="left:21px;top:618px;width:1872px;height:24px;background:#ffffff"></div>
<div class="a" style="left:21px;top:642px;width:1872px;height:1px;background:#c8c8c8"></div>
<div class="a" style="left:807px;top:618px;width:127px;height:24px;background:#ffa0a0"></div>
<div class="a" style="left:23px;top:619px"><svg width="16" height="21" viewBox="0 0 16 21"><defs><linearGradient id="gsellout" x1="0" y1="0" x2="0" y2="1"><stop offset="0.35" stop-color="#fff"/><stop offset="1" stop-color="#fbd3c6"/></linearGradient></defs><path d="M2.5 0.8H13.2Q15.2 0.8 15.2 2.8V14.3L9.5 20.2H2.5Q0.8 20.2 0.8 18.2V2.8Q0.8 0.8 2.5 0.8Z" fill="url(#gsellout)" stroke="#e4572e" stroke-width="1.6"/><path d="M15.2 14.3L9.5 20.2V14.3Z" fill="#d63a10"/><path d="M13 4.6H7V1.6L2.7 5.6L7 9.6V6.6H13Z" fill="#d23c16"/></svg></div>
<div class="t" style="left:48px;top:623px;font-size:15px;line-height:15px;color:#000;font-weight:normal;transform:scaleX(0.935);transform-origin:0 0">2020.05.13 09:18:47</div>
<div class="t" style="right:1615px;top:623px;font-size:15px;line-height:15px;color:#000;font-weight:normal;transform:scaleX(0.935);transform-origin:100% 0">39084563</div>
<div class="t" style="right:1526px;top:623px;font-size:15px;line-height:15px;color:#000;font-weight:normal;transform:scaleX(0.935);transform-origin:100% 0">54460610</div>
<div class="t" style="right:1424px;top:623px;font-size:15px;line-height:15px;color:#000;font-weight:normal;transform:scaleX(0.935);transform-origin:100% 0">epm20</div>
<div class="t" style="right:1348px;top:623px;font-size:15px;line-height:15px;color:#000;font-weight:normal;transform:scaleX(0.935);transform-origin:100% 0">sell</div>
<div class="t" style="right:1246px;top:623px;font-size:15px;line-height:15px;color:#000;font-weight:normal;transform:scaleX(0.935);transform-origin:100% 0">out</div>
<div class="t" style="right:1118px;top:623px;font-size:15px;line-height:15px;color:#000;font-weight:normal;transform:scaleX(0.935);transform-origin:100% 0">1.00</div>
<div class="t" style="right:990px;top:623px;font-size:15px;line-height:15px;color:#000;font-weight:normal;transform:scaleX(0.935);transform-origin:100% 0">2859.75</div>
<div class="t" style="right:862px;top:623px;font-size:15px;line-height:15px;color:#000;font-weight:normal;transform:scaleX(0.935);transform-origin:100% 0">2859.50</div>
<div class="t" style="right:734px;top:623px;font-size:15px;line-height:15px;color:#000;font-weight:normal;transform:scaleX(0.935);transform-origin:100% 0">2862.75</div>
<div class="t" style="right:632px;top:623px;font-size:15px;line-height:15px;color:#000;font-weight:normal;transform:scaleX(0.935);transform-origin:100% 0">-1.85</div>
<div class="t" style="right:300px;top:623px;font-size:15px;line-height:15px;color:#000;font-weight:normal;transform:scaleX(0.935);transform-origin:100% 0">12.50</div>
<div class="t" style="right:32px;top:623px;font-size:15px;line-height:15px;color:#000;font-weight:normal;transform:scaleX(0.965);transform-origin:100% 0">[sl 2859.50]</div>
<div class="a" style="left:21px;top:643px;width:1872px;height:24px;background:#ebebeb"></div>
<div class="a" style="left:21px;top:667px;width:1872px;height:1px;background:#c8c8c8"></div>
<div class="a" style="left:23px;top:644px"><svg width="16" height="21" viewBox="0 0 16 21"><defs><linearGradient id="gsellin" x1="0" y1="0" x2="0" y2="1"><stop offset="0.35" stop-color="#fff"/><stop offset="1" stop-color="#fbd3c6"/></linearGradient></defs><path d="M2.5 0.8H13.2Q15.2 0.8 15.2 2.8V14.3L9.5 20.2H2.5Q0.8 20.2 0.8 18.2V2.8Q0.8 0.8 2.5 0.8Z" fill="url(#gsellin)" stroke="#e4572e" stroke-width="1.6"/><path d="M15.2 14.3L9.5 20.2V14.3Z" fill="#d63a10"/><path d="M3 4.6H9V1.6L13.3 5.6L9 9.6V6.6H3Z" fill="#d23c16"/></svg></div>
<div class="t" style="left:48px;top:648px;font-size:15px;line-height:15px;color:#000;font-weight:normal;transform:scaleX(0.935);transform-origin:0 0">2020.05.13 09:20:33</div>
<div class="t" style="right:1615px;top:648px;font-size:15px;line-height:15px;color:#000;font-weight:normal;transform:scaleX(0.935);transform-origin:100% 0">39084662</div>
<div class="t" style="right:1526px;top:648px;font-size:15px;line-height:15px;color:#000;font-weight:normal;transform:scaleX(0.935);transform-origin:100% 0">54460777</div>
<div class="t" style="right:1424px;top:648px;font-size:15px;line-height:15px;color:#000;font-weight:normal;transform:scaleX(0.935);transform-origin:100% 0">epm20</div>
<div class="t" style="right:1348px;top:648px;font-size:15px;line-height:15px;color:#000;font-weight:normal;transform:scaleX(0.935);transform-origin:100% 0">sell</div>
<div class="t" style="right:1246px;top:648px;font-size:15px;line-height:15px;color:#000;font-weight:normal;transform:scaleX(0.935);transform-origin:100% 0">in</div>
<div class="t" style="right:1118px;top:648px;font-size:15px;line-height:15px;color:#000;font-weight:normal;transform:scaleX(0.935);transform-origin:100% 0">1.00</div>
<div class="t" style="right:990px;top:648px;font-size:15px;line-height:15px;color:#000;font-weight:normal;transform:scaleX(0.935);transform-origin:100% 0">2858.50</div>
<div class="t" style="right:862px;top:648px;font-size:15px;line-height:15px;color:#000;font-weight:normal;transform:scaleX(0.935);transform-origin:100% 0">2862.50</div>
<div class="t" style="right:734px;top:648px;font-size:15px;line-height:15px;color:#000;font-weight:normal;transform:scaleX(0.935);transform-origin:100% 0">2855.50</div>
<div class="t" style="right:632px;top:648px;font-size:15px;line-height:15px;color:#000;font-weight:normal;transform:scaleX(0.935);transform-origin:100% 0">-1.85</div>
<div class="t" style="right:32px;top:648px;font-size:15px;line-height:15px;color:#000;font-weight:normal;transform:scaleX(0.965);transform-origin:100% 0">VirtualTradePad</div>
<div class="a" style="left:21px;top:668px;width:1872px;height:24px;background:#ffffff"></div>
<div class="a" style="left:21px;top:692px;width:1872px;height:1px;background:#c8c8c8"></div>
<div class="a" style="left:23px;top:669px"><svg width="16" height="21" viewBox="0 0 16 21"><defs><linearGradient id="gbuyout" x1="0" y1="0" x2="0" y2="1"><stop offset="0.35" stop-color="#fff"/><stop offset="1" stop-color="#c9def6"/></linearGradient></defs><path d="M2.5 0.8H13.2Q15.2 0.8 15.2 2.8V14.3L9.5 20.2H2.5Q0.8 20.2 0.8 18.2V2.8Q0.8 0.8 2.5 0.8Z" fill="url(#gbuyout)" stroke="#3a8fd1" stroke-width="1.6"/><path d="M15.2 14.3L9.5 20.2V14.3Z" fill="#1f6fb8"/><path d="M13 4.6H7V1.6L2.7 5.6L7 9.6V6.6H13Z" fill="#2e5fc8"/></svg></div>
<div class="t" style="left:48px;top:673px;font-size:15px;line-height:15px;color:#000;font-weight:normal;transform:scaleX(0.935);transform-origin:0 0">2020.05.13 09:29:05</div>
<div class="t" style="right:1615px;top:673px;font-size:15px;line-height:15px;color:#000;font-weight:normal;transform:scaleX(0.935);transform-origin:100% 0">39085211</div>
<div class="t" style="right:1526px;top:673px;font-size:15px;line-height:15px;color:#000;font-weight:normal;transform:scaleX(0.935);transform-origin:100% 0">54461650</div>
<div class="t" style="right:1424px;top:673px;font-size:15px;line-height:15px;color:#000;font-weight:normal;transform:scaleX(0.935);transform-origin:100% 0">epm20</div>
<div class="t" style="right:1348px;top:673px;font-size:15px;line-height:15px;color:#000;font-weight:normal;transform:scaleX(0.935);transform-origin:100% 0">buy</div>
<div class="t" style="right:1246px;top:673px;font-size:15px;line-height:15px;color:#000;font-weight:normal;transform:scaleX(0.935);transform-origin:100% 0">out</div>
<div class="t" style="right:1118px;top:673px;font-size:15px;line-height:15px;color:#000;font-weight:normal;transform:scaleX(0.935);transform-origin:100% 0">1.00</div>
<div class="t" style="right:990px;top:673px;font-size:15px;line-height:15px;color:#000;font-weight:normal;transform:scaleX(0.935);transform-origin:100% 0">2857.25</div>
<div class="t" style="right:862px;top:673px;font-size:15px;line-height:15px;color:#000;font-weight:normal;transform:scaleX(0.935);transform-origin:100% 0">2862.50</div>
<div class="t" style="right:734px;top:673px;font-size:15px;line-height:15px;color:#000;font-weight:normal;transform:scaleX(0.935);transform-origin:100% 0">2855.50</div>
<div class="t" style="right:632px;top:673px;font-size:15px;line-height:15px;color:#000;font-weight:normal;transform:scaleX(0.935);transform-origin:100% 0">-1.85</div>
<div class="t" style="right:300px;top:673px;font-size:15px;line-height:15px;color:#000;font-weight:normal;transform:scaleX(0.935);transform-origin:100% 0">62.50</div>
<div class="a" style="left:21px;top:693px;width:1872px;height:24px;background:#ebebeb"></div>
<div class="a" style="left:21px;top:717px;width:1872px;height:1px;background:#c8c8c8"></div>
<div class="a" style="left:23px;top:694px"><svg width="16" height="21" viewBox="0 0 16 21"><defs><linearGradient id="gsellin" x1="0" y1="0" x2="0" y2="1"><stop offset="0.35" stop-color="#fff"/><stop offset="1" stop-color="#fbd3c6"/></linearGradient></defs><path d="M2.5 0.8H13.2Q15.2 0.8 15.2 2.8V14.3L9.5 20.2H2.5Q0.8 20.2 0.8 18.2V2.8Q0.8 0.8 2.5 0.8Z" fill="url(#gsellin)" stroke="#e4572e" stroke-width="1.6"/><path d="M15.2 14.3L9.5 20.2V14.3Z" fill="#d63a10"/><path d="M3 4.6H9V1.6L13.3 5.6L9 9.6V6.6H3Z" fill="#d23c16"/></svg></div>
<div class="t" style="left:48px;top:698px;font-size:15px;line-height:15px;color:#000;font-weight:normal;transform:scaleX(0.935);transform-origin:0 0">2020.05.13 09:30:09</div>
<div class="t" style="right:1615px;top:698px;font-size:15px;line-height:15px;color:#000;font-weight:normal;transform:scaleX(0.935);transform-origin:100% 0">39085312</div>
<div class="t" style="right:1526px;top:698px;font-size:15px;line-height:15px;color:#000;font-weight:normal;transform:scaleX(0.935);transform-origin:100% 0">54461798</div>
<div class="t" style="right:1424px;top:698px;font-size:15px;line-height:15px;color:#000;font-weight:normal;transform:scaleX(0.935);transform-origin:100% 0">epm20</div>
<div class="t" style="right:1348px;top:698px;font-size:15px;line-height:15px;color:#000;font-weight:normal;transform:scaleX(0.935);transform-origin:100% 0">sell</div>
<div class="t" style="right:1246px;top:698px;font-size:15px;line-height:15px;color:#000;font-weight:normal;transform:scaleX(0.935);transform-origin:100% 0">in</div>
<div class="t" style="right:1118px;top:698px;font-size:15px;line-height:15px;color:#000;font-weight:normal;transform:scaleX(0.935);transform-origin:100% 0">1.00</div>
<div class="t" style="right:990px;top:698px;font-size:15px;line-height:15px;color:#000;font-weight:normal;transform:scaleX(0.935);transform-origin:100% 0">2854.50</div>
<div class="t" style="right:862px;top:698px;font-size:15px;line-height:15px;color:#000;font-weight:normal;transform:scaleX(0.935);transform-origin:100% 0">2858.25</div>
<div class="t" style="right:734px;top:698px;font-size:15px;line-height:15px;color:#000;font-weight:normal;transform:scaleX(0.935);transform-origin:100% 0">2851.25</div>
<div class="t" style="right:632px;top:698px;font-size:15px;line-height:15px;color:#000;font-weight:normal;transform:scaleX(0.935);transform-origin:100% 0">-1.85</div>
<div class="t" style="right:32px;top:698px;font-size:15px;line-height:15px;color:#000;font-weight:normal;transform:scaleX(0.965);transform-origin:100% 0">VirtualTradePad</div>
<div class="a" style="left:21px;top:718px;width:1872px;height:24px;background:#ffffff"></div>
<div class="a" style="left:21px;top:742px;width:1872px;height:1px;background:#c8c8c8"></div>
<div class="a" style="left:807px;top:718px;width:127px;height:24px;background:#ffa0a0"></div>
<div class="a" style="left:23px;top:719px"><svg width="16" height="21" viewBox="0 0 16 21"><defs><linearGradient id="gbuyout" x1="0" y1="0" x2="0" y2="1"><stop offset="0.35" stop-color="#fff"/><stop offset="1" stop-color="#c9def6"/></linearGradient></defs><path d="M2.5 0.8H13.2Q15.2 0.8 15.2 2.8V14.3L9.5 20.2H2.5Q0.8 20.2 0.8 18.2V2.8Q0.8 0.8 2.5 0.8Z" fill="url(#gbuyout)" stroke="#3a8fd1" stroke-width="1.6"/><path d="M15.2 14.3L9.5 20.2V14.3Z" fill="#1f6fb8"/><path d="M13 4.6H7V1.6L2.7 5.6L7 9.6V6.6H13Z" fill="#2e5fc8"/></svg></div>
<div class="t" style="left:48px;top:723px;font-size:15px;line-height:15px;color:#000;font-weight:normal;transform:scaleX(0.935);transform-origin:0 0">2020.05.13 09:34:17</div>
<div class="t" style="right:1615px;top:723px;font-size:15px;line-height:15px;color:#000;font-weight:normal;transform:scaleX(0.935);transform-origin:100% 0">39085587</div>
<div class="t" style="right:1526px;top:723px;font-size:15px;line-height:15px;color:#000;font-weight:normal;transform:scaleX(0.935);transform-origin:100% 0">54462238</div>
<div class="t" style="right:1424px;top:723px;font-size:15px;line-height:15px;color:#000;font-weight:normal;transform:scaleX(0.935);transform-origin:100% 0">epm20</div>
<div class="t" style="right:1348px;top:723px;font-size:15px;line-height:15px;color:#000;font-weight:normal;transform:scaleX(0.935);transform-origin:100% 0">buy</div>
<div class="t" style="right:1246px;top:723px;font-size:15px;line-height:15px;color:#000;font-weight:normal;transform:scaleX(0.935);transform-origin:100% 0">out</div>
<div class="t" style="right:1118px;top:723px;font-size:15px;line-height:15px;color:#000;font-weight:normal;transform:scaleX(0.935);transform-origin:100% 0">1.00</div>
<div class="t" style="right:990px;top:723px;font-size:15px;line-height:15px;color:#000;font-weight:normal;transform:scaleX(0.935);transform-origin:100% 0">2858.25</div>
<div class="t" style="right:862px;top:723px;font-size:15px;line-height:15px;color:#000;font-weight:normal;transform:scaleX(0.935);transform-origin:100% 0">2858.25</div>
<div class="t" style="right:734px;top:723px;font-size:15px;line-height:15px;color:#000;font-weight:normal;transform:scaleX(0.935);transform-origin:100% 0">2851.25</div>
<div class="t" style="right:632px;top:723px;font-size:15px;line-height:15px;color:#000;font-weight:normal;transform:scaleX(0.935);transform-origin:100% 0">-1.85</div>
<div class="t" style="right:300px;top:723px;font-size:15px;line-height:15px;color:#000;font-weight:normal;transform:scaleX(0.935);transform-origin:100% 0">-187.50</div>
<div class="t" style="right:32px;top:723px;font-size:15px;line-height:15px;color:#000;font-weight:normal;transform:scaleX(0.965);transform-origin:100% 0">[sl 2858.25]</div>
<div class="a" style="left:21px;top:743px;width:1872px;height:24px;background:#ebebeb"></div>
<div class="a" style="left:21px;top:767px;width:1872px;height:1px;background:#c8c8c8"></div>
<div class="a" style="left:23px;top:744px"><svg width="16" height="21" viewBox="0 0 16 21"><defs><linearGradient id="gsellin" x1="0" y1="0" x2="0" y2="1"><stop offset="0.35" stop-color="#fff"/><stop offset="1" stop-color="#fbd3c6"/></linearGradient></defs><path d="M2.5 0.8H13.2Q15.2 0.8 15.2 2.8V14.3L9.5 20.2H2.5Q0.8 20.2 0.8 18.2V2.8Q0.8 0.8 2.5 0.8Z" fill="url(#gsellin)" stroke="#e4572e" stroke-width="1.6"/><path d="M15.2 14.3L9.5 20.2V14.3Z" fill="#d63a10"/><path d="M3 4.6H9V1.6L13.3 5.6L9 9.6V6.6H3Z" fill="#d23c16"/></svg></div>
<div class="t" style="left:48px;top:748px;font-size:15px;line-height:15px;color:#000;font-weight:normal;transform:scaleX(0.935);transform-origin:0 0">2020.05.13 09:42:16</div>
<div class="t" style="right:1615px;top:748px;font-size:15px;line-height:15px;color:#000;font-weight:normal;transform:scaleX(0.935);transform-origin:100% 0">39086112</div>
<div class="t" style="right:1526px;top:748px;font-size:15px;line-height:15px;color:#000;font-weight:normal;transform:scaleX(0.935);transform-origin:100% 0">54463098</div>
<div class="t" style="right:1424px;top:748px;font-size:15px;line-height:15px;color:#000;font-weight:normal;transform:scaleX(0.935);transform-origin:100% 0">epm20</div>
<div class="t" style="right:1348px;top:748px;font-size:15px;line-height:15px;color:#000;font-weight:normal;transform:scaleX(0.935);transform-origin:100% 0">sell</div>
<div class="t" style="right:1246px;top:748px;font-size:15px;line-height:15px;color:#000;font-weight:normal;transform:scaleX(0.935);transform-origin:100% 0">in</div>
<div class="t" style="right:1118px;top:748px;font-size:15px;line-height:15px;color:#000;font-weight:normal;transform:scaleX(0.935);transform-origin:100% 0">1.00</div>
<div class="t" style="right:990px;top:748px;font-size:15px;line-height:15px;color:#000;font-weight:normal;transform:scaleX(0.935);transform-origin:100% 0">2860.00</div>
<div class="t" style="right:862px;top:748px;font-size:15px;line-height:15px;color:#000;font-weight:normal;transform:scaleX(0.935);transform-origin:100% 0">2864.00</div>
<div class="t" style="right:734px;top:748px;font-size:15px;line-height:15px;color:#000;font-weight:normal;transform:scaleX(0.935);transform-origin:100% 0">2857.00</div>
<div class="t" style="right:632px;top:748px;font-size:15px;line-height:15px;color:#000;font-weight:normal;transform:scaleX(0.935);transform-origin:100% 0">-1.85</div>
<div class="t" style="right:32px;top:748px;font-size:15px;line-height:15px;color:#000;font-weight:normal;transform:scaleX(0.965);transform-origin:100% 0">VirtualTradePad</div>
<div class="a" style="left:21px;top:768px;width:1872px;height:24px;background:#ffffff"></div>
<div class="a" style="left:21px;top:792px;width:1872px;height:1px;background:#c8c8c8"></div>
<div class="a" style="left:23px;top:769px"><svg width="16" height="21" viewBox="0 0 16 21"><defs><linearGradient id="gbuyout" x1="0" y1="0" x2="0" y2="1"><stop offset="0.35" stop-color="#fff"/><stop offset="1" stop-color="#c9def6"/></linearGradient></defs><path d="M2.5 0.8H13.2Q15.2 0.8 15.2 2.8V14.3L9.5 20.2H2.5Q0.8 20.2 0.8 18.2V2.8Q0.8 0.8 2.5 0.8Z" fill="url(#gbuyout)" stroke="#3a8fd1" stroke-width="1.6"/><path d="M15.2 14.3L9.5 20.2V14.3Z" fill="#1f6fb8"/><path d="M13 4.6H7V1.6L2.7 5.6L7 9.6V6.6H13Z" fill="#2e5fc8"/></svg></div>
<div class="t" style="left:48px;top:773px;font-size:15px;line-height:15px;color:#000;font-weight:normal;transform:scaleX(0.935);transform-origin:0 0">2020.05.13 09:44:11</div>
<div class="t" style="right:1615px;top:773px;font-size:15px;line-height:15px;color:#000;font-weight:normal;transform:scaleX(0.935);transform-origin:100% 0">39086185</div>
<div class="t" style="right:1526px;top:773px;font-size:15px;line-height:15px;color:#000;font-weight:normal;transform:scaleX(0.935);transform-origin:100% 0">54463246</div>
<div class="t" style="right:1424px;top:773px;font-size:15px;line-height:15px;color:#000;font-weight:normal;transform:scaleX(0.935);transform-origin:100% 0">epm20</div>
<div class="t" style="right:1348px;top:773px;font-size:15px;line-height:15px;color:#000;font-weight:normal;transform:scaleX(0.935);transform-origin:100% 0">buy</div>
<div class="t" style="right:1246px;top:773px;font-size:15px;line-height:15px;color:#000;font-weight:normal;transform:scaleX(0.935);transform-origin:100% 0">out</div>
<div class="t" style="right:1118px;top:773px;font-size:15px;line-height:15px;color:#000;font-weight:normal;transform:scaleX(0.935);transform-origin:100% 0">1.00</div>
<div class="t" style="right:990px;top:773px;font-size:15px;line-height:15px;color:#000;font-weight:normal;transform:scaleX(0.935);transform-origin:100% 0">2859.75</div>
<div class="t" style="right:862px;top:773px;font-size:15px;line-height:15px;color:#000;font-weight:normal;transform:scaleX(0.935);transform-origin:100% 0">2864.00</div>
<div class="t" style="right:734px;top:773px;font-size:15px;line-height:15px;color:#000;font-weight:normal;transform:scaleX(0.935);transform-origin:100% 0">2857.00</div>
<div class="t" style="right:632px;top:773px;font-size:15px;line-height:15px;color:#000;font-weight:normal;transform:scaleX(0.935);transform-origin:100% 0">-1.85</div>
<div class="t" style="right:300px;top:773px;font-size:15px;line-height:15px;color:#000;font-weight:normal;transform:scaleX(0.935);transform-origin:100% 0">12.50</div>
<div class="a" style="left:21px;top:793px;width:1872px;height:24px;background:#ebebeb"></div>
<div class="a" style="left:21px;top:817px;width:1872px;height:1px;background:#c8c8c8"></div>
<div class="a" style="left:23px;top:794px"><svg width="16" height="21" viewBox="0 0 16 21"><defs><linearGradient id="gbuyin" x1="0" y1="0" x2="0" y2="1"><stop offset="0.35" stop-color="#fff"/><stop offset="1" stop-color="#c9def6"/></linearGradient></defs><path d="M2.5 0.8H13.2Q15.2 0.8 15.2 2.8V14.3L9.5 20.2H2.5Q0.8 20.2 0.8 18.2V2.8Q0.8 0.8 2.5 0.8Z" fill="url(#gbuyin)" stroke="#3a8fd1" stroke-width="1.6"/><path d="M15.2 14.3L9.5 20.2V14.3Z" fill="#1f6fb8"/><path d="M3 4.6H9V1.6L13.3 5.6L9 9.6V6.6H3Z" fill="#2e5fc8"/></svg></div>
<div class="t" style="left:48px;top:798px;font-size:15px;line-height:15px;color:#000;font-weight:normal;transform:scaleX(0.935);transform-origin:0 0">2020.05.13 09:48:55</div>
<div class="t" style="right:1615px;top:798px;font-size:15px;line-height:15px;color:#000;font-weight:normal;transform:scaleX(0.935);transform-origin:100% 0">39086482</div>
<div class="t" style="right:1526px;top:798px;font-size:15px;line-height:15px;color:#000;font-weight:normal;transform:scaleX(0.935);transform-origin:100% 0">54463708</div>
<div class="t" style="right:1424px;top:798px;font-size:15px;line-height:15px;color:#000;font-weight:normal;transform:scaleX(0.935);transform-origin:100% 0">epm20</div>
<div class="t" style="right:1348px;top:798px;font-size:15px;line-height:15px;color:#000;font-weight:normal;transform:scaleX(0.935);transform-origin:100% 0">buy</div>
<div class="t" style="right:1246px;top:798px;font-size:15px;line-height:15px;color:#000;font-weight:normal;transform:scaleX(0.935);transform-origin:100% 0">in</div>
<div class="t" style="right:1118px;top:798px;font-size:15px;line-height:15px;color:#000;font-weight:normal;transform:scaleX(0.935);transform-origin:100% 0">1.00</div>
<div class="t" style="right:990px;top:798px;font-size:15px;line-height:15px;color:#000;font-weight:normal;transform:scaleX(0.935);transform-origin:100% 0">2863.25</div>
<div class="t" style="right:862px;top:798px;font-size:15px;line-height:15px;color:#000;font-weight:normal;transform:scaleX(0.935);transform-origin:100% 0">2859.50</div>
<div class="t" style="right:734px;top:798px;font-size:15px;line-height:15px;color:#000;font-weight:normal;transform:scaleX(0.935);transform-origin:100% 0">2866.50</div>
<div class="t" style="right:632px;top:798px;font-size:15px;line-height:15px;color:#000;font-weight:normal;transform:scaleX(0.935);transform-origin:100% 0">-1.85</div>
<div class="t" style="right:32px;top:798px;font-size:15px;line-height:15px;color:#000;font-weight:normal;transform:scaleX(0.965);transform-origin:100% 0">VirtualTradePad</div>
<div class="a" style="left:21px;top:818px;width:1872px;height:24px;background:#ffffff"></div>
<div class="a" style="left:21px;top:842px;width:1872px;height:1px;background:#c8c8c8"></div>
<div class="a" style="left:23px;top:819px"><svg width="16" height="21" viewBox="0 0 16 21"><defs><linearGradient id="gsellout" x1="0" y1="0" x2="0" y2="1"><stop offset="0.35" stop-color="#fff"/><stop offset="1" stop-color="#fbd3c6"/></linearGradient></defs><path d="M2.5 0.8H13.2Q15.2 0.8 15.2 2.8V14.3L9.5 20.2H2.5Q0.8 20.2 0.8 18.2V2.8Q0.8 0.8 2.5 0.8Z" fill="url(#gsellout)" stroke="#e4572e" stroke-width="1.6"/><path d="M15.2 14.3L9.5 20.2V14.3Z" fill="#d63a10"/><path d="M13 4.6H7V1.6L2.7 5.6L7 9.6V6.6H13Z" fill="#d23c16"/></svg></div>
<div class="t" style="left:48px;top:823px;font-size:15px;line-height:15px;color:#000;font-weight:normal;transform:scaleX(0.935);transform-origin:0 0">2020.05.13 09:49:02</div>
<div class="t" style="right:1615px;top:823px;font-size:15px;line-height:15px;color:#000;font-weight:normal;transform:scaleX(0.935);transform-origin:100% 0">39086489</div>
<div class="t" style="right:1526px;top:823px;font-size:15px;line-height:15px;color:#000;font-weight:normal;transform:scaleX(0.935);transform-origin:100% 0">54463721</div>
<div class="t" style="right:1424px;top:823px;font-size:15px;line-height:15px;color:#000;font-weight:normal;transform:scaleX(0.935);transform-origin:100% 0">epm20</div>
<div class="t" style="right:1348px;top:823px;font-size:15px;line-height:15px;color:#000;font-weight:normal;transform:scaleX(0.935);transform-origin:100% 0">sell</div>
<div class="t" style="right:1246px;top:823px;font-size:15px;line-height:15px;color:#000;font-weight:normal;transform:scaleX(0.935);transform-origin:100% 0">out</div>
<div class="t" style="right:1118px;top:823px;font-size:15px;line-height:15px;color:#000;font-weight:normal;transform:scaleX(0.935);transform-origin:100% 0">1.00</div>
<div class="t" style="right:990px;top:823px;font-size:15px;line-height:15px;color:#000;font-weight:normal;transform:scaleX(0.935);transform-origin:100% 0">2863.75</div>
<div class="t" style="right:862px;top:823px;font-size:15px;line-height:15px;color:#000;font-weight:normal;transform:scaleX(0.935);transform-origin:100% 0">2863.50</div>
<div class="t" style="right:734px;top:823px;font-size:15px;line-height:15px;color:#000;font-weight:normal;transform:scaleX(0.935);transform-origin:100% 0">2866.50</div>
<div class="t" style="right:632px;top:823px;font-size:15px;line-height:15px;color:#000;font-weight:normal;transform:scaleX(0.935);transform-origin:100% 0">-1.85</div>
<div class="t" style="right:300px;top:823px;font-size:15px;line-height:15px;color:#000;font-weight:normal;transform:scaleX(0.935);transform-origin:100% 0">25.00</div>
<div class="a" style="left:21px;top:843px;width:1872px;height:24px;background:#ebebeb"></div>
<div class="a" style="left:21px;top:867px;width:1872px;height:1px;background:#c8c8c8"></div>
<div class="a" style="left:23px;top:844px"><svg width="16" height="21" viewBox="0 0 16 21"><defs><linearGradient id="gbuyin" x1="0" y1="0" x2="0" y2="1"><stop offset="0.35" stop-color="#fff"/><stop offset="1" stop-color="#c9def6"/></linearGradient></defs><path d="M2.5 0.8H13.2Q15.2 0.8 15.2 2.8V14.3L9.5 20.2H2.5Q0.8 20.2 0.8 18.2V2.8Q0.8 0.8 2.5 0.8Z" fill="url(#gbuyin)" stroke="#3a8fd1" stroke-width="1.6"/><path d="M15.2 14.3L9.5 20.2V14.3Z" fill="#1f6fb8"/><path d="M3 4.6H9V1.6L13.3 5.6L9 9.6V6.6H3Z" fill="#2e5fc8"/></svg></div>
<div class="t" style="left:48px;top:848px;font-size:15px;line-height:15px;color:#000;font-weight:normal;transform:scaleX(0.935);transform-origin:0 0">2020.05.13 09:50:34</div>
<div class="t" style="right:1615px;top:848px;font-size:15px;line-height:15px;color:#000;font-weight:normal;transform:scaleX(0.935);transform-origin:100% 0">39086688</div>
<div class="t" style="right:1526px;top:848px;font-size:15px;line-height:15px;color:#000;font-weight:normal;transform:scaleX(0.935);transform-origin:100% 0">54463969</div>
<div class="t" style="right:1424px;top:848px;font-size:15px;line-height:15px;color:#000;font-weight:normal;transform:scaleX(0.935);transform-origin:100% 0">epm20</div>
<div class="t" style="right:1348px;top:848px;font-size:15px;line-height:15px;color:#000;font-weight:normal;transform:scaleX(0.935);transform-origin:100% 0">buy</div>
<div class="t" style="right:1246px;top:848px;font-size:15px;line-height:15px;color:#000;font-weight:normal;transform:scaleX(0.935);transform-origin:100% 0">in</div>
<div class="t" style="right:1118px;top:848px;font-size:15px;line-height:15px;color:#000;font-weight:normal;transform:scaleX(0.935);transform-origin:100% 0">1.00</div>
<div class="t" style="right:990px;top:848px;font-size:15px;line-height:15px;color:#000;font-weight:normal;transform:scaleX(0.935);transform-origin:100% 0">2865.75</div>
<div class="t" style="right:862px;top:848px;font-size:15px;line-height:15px;color:#000;font-weight:normal;transform:scaleX(0.935);transform-origin:100% 0">2862.00</div>
<div class="t" style="right:734px;top:848px;font-size:15px;line-height:15px;color:#000;font-weight:normal;transform:scaleX(0.935);transform-origin:100% 0">2869.00</div>
<div class="t" style="right:632px;top:848px;font-size:15px;line-height:15px;color:#000;font-weight:normal;transform:scaleX(0.935);transform-origin:100% 0">-1.85</div>
<div class="t" style="right:32px;top:848px;font-size:15px;line-height:15px;color:#000;font-weight:normal;transform:scaleX(0.965);transform-origin:100% 0">VirtualTradePad</div>
<div class="a" style="left:21px;top:868px;width:1872px;height:24px;background:#ffffff"></div>
<div class="a" style="left:21px;top:892px;width:1872px;height:1px;background:#c8c8c8"></div>
<div class="a" style="left:23px;top:869px"><svg width="16" height="21" viewBox="0 0 16 21"><defs><linearGradient id="gsellout" x1="0" y1="0" x2="0" y2="1"><stop offset="0.35" stop-color="#fff"/><stop offset="1" stop-color="#fbd3c6"/></linearGradient></defs><path d="M2.5 0.8H13.2Q15.2 0.8 15.2 2.8V14.3L9.5 20.2H2.5Q0.8 20.2 0.8 18.2V2.8Q0.8 0.8 2.5 0.8Z" fill="url(#gsellout)" stroke="#e4572e" stroke-width="1.6"/><path d="M15.2 14.3L9.5 20.2V14.3Z" fill="#d63a10"/><path d="M13 4.6H7V1.6L2.7 5.6L7 9.6V6.6H13Z" fill="#d23c16"/></svg></div>
<div class="t" style="left:48px;top:873px;font-size:15px;line-height:15px;color:#000;font-weight:normal;transform:scaleX(0.935);transform-origin:0 0">2020.05.13 09:50:38</div>
<div class="t" style="right:1615px;top:873px;font-size:15px;line-height:15px;color:#000;font-weight:normal;transform:scaleX(0.935);transform-origin:100% 0">39086696</div>
<div class="t" style="right:1526px;top:873px;font-size:15px;line-height:15px;color:#000;font-weight:normal;transform:scaleX(0.935);transform-origin:100% 0">54463985</div>
<div class="t" style="right:1424px;top:873px;font-size:15px;line-height:15px;color:#000;font-weight:normal;transform:scaleX(0.935);transform-origin:100% 0">epm20</div>
<div class="t" style="right:1348px;top:873px;font-size:15px;line-height:15px;color:#000;font-weight:normal;transform:scaleX(0.935);transform-origin:100% 0">sell</div>
<div class="t" style="right:1246px;top:873px;font-size:15px;line-height:15px;color:#000;font-weight:normal;transform:scaleX(0.935);transform-origin:100% 0">out</div>
<div class="t" style="right:1118px;top:873px;font-size:15px;line-height:15px;color:#000;font-weight:normal;transform:scaleX(0.935);transform-origin:100% 0">1.00</div>
<div class="t" style="right:990px;top:873px;font-size:15px;line-height:15px;color:#000;font-weight:normal;transform:scaleX(0.935);transform-origin:100% 0">2866.25</div>
<div class="t" style="right:862px;top:873px;font-size:15px;line-height:15px;color:#000;font-weight:normal;transform:scaleX(0.935);transform-origin:100% 0">2866.00</div>
<div class="t" style="right:734px;top:873px;font-size:15px;line-height:15px;color:#000;font-weight:normal;transform:scaleX(0.935);transform-origin:100% 0">2869.00</div>
<div class="t" style="right:632px;top:873px;font-size:15px;line-height:15px;color:#000;font-weight:normal;transform:scaleX(0.935);transform-origin:100% 0">-1.85</div>
<div class="t" style="right:300px;top:873px;font-size:15px;line-height:15px;color:#000;font-weight:normal;transform:scaleX(0.935);transform-origin:100% 0">25.00</div>
<div class="a" style="left:21px;top:893px;width:1872px;height:24px;background:#ebebeb"></div>
<div class="a" style="left:21px;top:917px;width:1872px;height:1px;background:#c8c8c8"></div>
<div class="a" style="left:23px;top:894px"><svg width="16" height="21" viewBox="0 0 16 21"><defs><linearGradient id="gbuyin" x1="0" y1="0" x2="0" y2="1"><stop offset="0.35" stop-color="#fff"/><stop offset="1" stop-color="#c9def6"/></linearGradient></defs><path d="M2.5 0.8H13.2Q15.2 0.8 15.2 2.8V14.3L9.5 20.2H2.5Q0.8 20.2 0.8 18.2V2.8Q0.8 0.8 2.5 0.8Z" fill="url(#gbuyin)" stroke="#3a8fd1" stroke-width="1.6"/><path d="M15.2 14.3L9.5 20.2V14.3Z" fill="#1f6fb8"/><path d="M3 4.6H9V1.6L13.3 5.6L9 9.6V6.6H3Z" fill="#2e5fc8"/></svg></div>
<div class="t" style="left:48px;top:898px;font-size:15px;line-height:15px;color:#000;font-weight:normal;transform:scaleX(0.935);transform-origin:0 0">2020.05.13 09:52:17</div>
<div class="t" style="right:1615px;top:898px;font-size:15px;line-height:15px;color:#000;font-weight:normal;transform:scaleX(0.935);transform-origin:100% 0">39086826</div>
<div class="t" style="right:1526px;top:898px;font-size:15px;line-height:15px;color:#000;font-weight:normal;transform:scaleX(0.935);transform-origin:100% 0">54464237</div>
<div class="t" style="right:1424px;top:898px;font-size:15px;line-height:15px;color:#000;font-weight:normal;transform:scaleX(0.935);transform-origin:100% 0">epm20</div>
<div class="t" style="right:1348px;top:898px;font-size:15px;line-height:15px;color:#000;font-weight:normal;transform:scaleX(0.935);transform-origin:100% 0">buy</div>
<div class="t" style="right:1246px;top:898px;font-size:15px;line-height:15px;color:#000;font-weight:normal;transform:scaleX(0.935);transform-origin:100% 0">in</div>
<div class="t" style="right:1118px;top:898px;font-size:15px;line-height:15px;color:#000;font-weight:normal;transform:scaleX(0.935);transform-origin:100% 0">1.00</div>
<div class="t" style="right:990px;top:898px;font-size:15px;line-height:15px;color:#000;font-weight:normal;transform:scaleX(0.935);transform-origin:100% 0">2868.25</div>
<div class="t" style="right:862px;top:898px;font-size:15px;line-height:15px;color:#000;font-weight:normal;transform:scaleX(0.935);transform-origin:100% 0">2864.50</div>
<div class="t" style="right:734px;top:898px;font-size:15px;line-height:15px;color:#000;font-weight:normal;transform:scaleX(0.935);transform-origin:100% 0">2871.50</div>
<div class="t" style="right:632px;top:898px;font-size:15px;line-height:15px;color:#000;font-weight:normal;transform:scaleX(0.935);transform-origin:100% 0">-1.85</div>
<div class="t" style="right:32px;top:898px;font-size:15px;line-height:15px;color:#000;font-weight:normal;transform:scaleX(0.965);transform-origin:100% 0">VirtualTradePad</div>
<div class="a" style="left:21px;top:918px;width:1872px;height:24px;background:#ffffff"></div>
<div class="a" style="left:807px;top:918px;width:127px;height:24px;background:#ffa0a0"></div>
<div class="a" style="left:23px;top:919px"><svg width="16" height="21" viewBox="0 0 16 21"><defs><linearGradient id="gsellout" x1="0" y1="0" x2="0" y2="1"><stop offset="0.35" stop-color="#fff"/><stop offset="1" stop-color="#fbd3c6"/></linearGradient></defs><path d="M2.5 0.8H13.2Q15.2 0.8 15.2 2.8V14.3L9.5 20.2H2.5Q0.8 20.2 0.8 18.2V2.8Q0.8 0.8 2.5 0.8Z" fill="url(#gsellout)" stroke="#e4572e" stroke-width="1.6"/><path d="M15.2 14.3L9.5 20.2V14.3Z" fill="#d63a10"/><path d="M13 4.6H7V1.6L2.7 5.6L7 9.6V6.6H13Z" fill="#d23c16"/></svg></div>
<div class="t" style="left:48px;top:923px;font-size:15px;line-height:15px;color:#000;font-weight:normal;transform:scaleX(0.935);transform-origin:0 0">2020.05.13 09:52:29</div>
<div class="t" style="right:1615px;top:923px;font-size:15px;line-height:15px;color:#000;font-weight:normal;transform:scaleX(0.935);transform-origin:100% 0">39086838</div>
<div class="t" style="right:1526px;top:923px;font-size:15px;line-height:15px;color:#000;font-weight:normal;transform:scaleX(0.935);transform-origin:100% 0">54464252</div>
<div class="t" style="right:1424px;top:923px;font-size:15px;line-height:15px;color:#000;font-weight:normal;transform:scaleX(0.935);transform-origin:100% 0">epm20</div>
<div class="t" style="right:1348px;top:923px;font-size:15px;line-height:15px;color:#000;font-weight:normal;transform:scaleX(0.935);transform-origin:100% 0">sell</div>
<div class="t" style="right:1246px;top:923px;font-size:15px;line-height:15px;color:#000;font-weight:normal;transform:scaleX(0.935);transform-origin:100% 0">out</div>
<div class="t" style="right:1118px;top:923px;font-size:15px;line-height:15px;color:#000;font-weight:normal;transform:scaleX(0.935);transform-origin:100% 0">1.00</div>
<div class="t" style="right:990px;top:923px;font-size:15px;line-height:15px;color:#000;font-weight:normal;transform:scaleX(0.935);transform-origin:100% 0">2868.25</div>
<div class="t" style="right:862px;top:923px;font-size:15px;line-height:15px;color:#000;font-weight:normal;transform:scaleX(0.935);transform-origin:100% 0">2868.25</div>
<div class="t" style="right:734px;top:923px;font-size:15px;line-height:15px;color:#000;font-weight:normal;transform:scaleX(0.935);transform-origin:100% 0">2871.50</div>
<div class="t" style="right:632px;top:923px;font-size:15px;line-height:15px;color:#000;font-weight:normal;transform:scaleX(0.935);transform-origin:100% 0">-1.85</div>
<div class="t" style="right:300px;top:923px;font-size:15px;line-height:15px;color:#000;font-weight:normal;transform:scaleX(0.935);transform-origin:100% 0">0.00</div>
<div class="t" style="right:32px;top:923px;font-size:15px;line-height:15px;color:#000;font-weight:normal;transform:scaleX(0.965);transform-origin:100% 0">[sl 2868.25]</div>
<div class="a" style="left:220px;top:193px;width:1px;height:749px;background:#c8c8c8"></div>
<div class="a" style="left:309px;top:193px;width:1px;height:749px;background:#c8c8c8"></div>
<div class="a" style="left:398px;top:193px;width:1px;height:749px;background:#c8c8c8"></div>
<div class="a" style="left:500px;top:193px;width:1px;height:749px;background:#c8c8c8"></div>
<div class="a" style="left:576px;top:193px;width:1px;height:749px;background:#c8c8c8"></div>
<div class="a" style="left:678px;top:193px;width:1px;height:749px;background:#c8c8c8"></div>
<div class="a" style="left:806px;top:193px;width:1px;height:749px;background:#c8c8c8"></div>
<div class="a" style="left:934px;top:193px;width:1px;height:749px;background:#c8c8c8"></div>
<div class="a" style="left:1062px;top:193px;width:1px;height:749px;background:#c8c8c8"></div>
<div class="a" style="left:1190px;top:193px;width:1px;height:749px;background:#c8c8c8"></div>
<div class="a" style="left:1292px;top:193px;width:1px;height:749px;background:#c8c8c8"></div>
<div class="a" style="left:1394px;top:193px;width:1px;height:749px;background:#c8c8c8"></div>
<div class="a" style="left:1496px;top:193px;width:1px;height:749px;background:#c8c8c8"></div>
<div class="a" style="left:1624px;top:193px;width:1px;height:749px;background:#c8c8c8"></div>
<div class="a" style="left:21px;top:942px;width:1872px;height:26px;background:#c8c8c8"></div>
<svg class="a" style="left:23px;top:946px" width="16" height="16" viewBox="0 0 16 16"><circle cx="8" cy="8" r="6.8" fill="none" stroke="#333" stroke-width="1.6"/><path d="M8 4.2V11.8M4.2 8H11.8" stroke="#222" stroke-width="2"/></svg>
<div class="t" style="left:48px;top:948px;font-size:15px;line-height:15px;color:#000;font-weight:bold;">Прибыль: 78.30  Кредит: 0.00  Депозит: 100 000.00  Снятие: 0.00  Баланс: 100 078.30</div>
<div class="t" style="right:632px;top:948px;font-size:15px;line-height:15px;color:#000;font-weight:bold;">-59.20</div>
<div class="t" style="right:530px;top:948px;font-size:15px;line-height:15px;color:#000;font-weight:bold;">0.00</div>
<div class="t" style="right:428px;top:948px;font-size:15px;line-height:15px;color:#000;font-weight:bold;">0.00</div>
<div class="t" style="right:300px;top:948px;font-size:15px;line-height:15px;color:#000;font-weight:bold;">137.50</div>
<div class="a" style="left:1893px;top:167px;width:21px;height:801px;background:#f0f0f0"></div>
<div class="a" style="left:1894px;top:255px;width:19px;height:692px;background:#cdcdcd"></div>
<svg class="a" style="left:1898px;top:174px" width="11" height="7" viewBox="0 0 11 7"><path d="M1 6L5.5 1.5L10 6" fill="none" stroke="#606060" stroke-width="1.8"/></svg>
<svg class="a" style="left:1898px;top:954px" width="11" height="7" viewBox="0 0 11 7"><path d="M1 1L5.5 5.5L10 1" fill="none" stroke="#606060" stroke-width="1.8"/></svg>
<div class="a" style="left:21px;top:968px;width:1894px;height:1px;background:#000"></div>
<div class="a" style="left:20px;top:970px;width:1px;height:26px;background:#a0a0a0"></div>
<div class="a" style="left:1915px;top:166px;width:1px;height:830px;background:#fff"></div>
<div class="a" style="left:20px;top:996px;width:1896px;height:1px;background:#fff"></div>
<div class="t" style="left:36px;top:973px;font-size:15px;line-height:15px;color:#6d6d6d;font-weight:normal;">Торговля</div>
<div class="t" style="left:126px;top:973px;font-size:15px;line-height:15px;color:#6d6d6d;font-weight:normal;">Активы</div>
<div class="t" style="left:287px;top:973px;font-size:15px;line-height:15px;color:#6d6d6d;font-weight:normal;">Новости</div>
<div class="t" style="left:371px;top:973px;font-size:15px;line-height:15px;color:#6d6d6d;font-weight:normal;">Почта</div>
<div class="t" style="left:448px;top:973px;font-size:15px;line-height:15px;color:#6d6d6d;font-weight:normal;">Календарь</div>
<div class="t" style="left:548px;top:973px;font-size:15px;line-height:15px;color:#6d6d6d;font-weight:normal;">Компания</div>
<div class="t" style="left:644px;top:973px;font-size:15px;line-height:15px;color:#6d6d6d;font-weight:normal;">Маркет</div>
<div class="t" style="left:720px;top:973px;font-size:15px;line-height:15px;color:#6d6d6d;font-weight:normal;">Алерты</div>
<div class="t" style="left:797px;top:973px;font-size:15px;line-height:15px;color:#6d6d6d;font-weight:normal;">Сигналы</div>
<div class="t" style="left:882px;top:973px;font-size:15px;line-height:15px;color:#6d6d6d;font-weight:normal;">Статьи</div>
<div class="t" style="left:963px;top:973px;font-size:15px;line-height:15px;color:#6d6d6d;font-weight:normal;">Библиотека</div>
<div class="t" style="left:1070px;top:974px;font-size:14px;line-height:14px;color:#6d6d6d;font-weight:normal;">VPS</div>
<div class="t" style="left:1120px;top:973px;font-size:15px;line-height:15px;color:#6d6d6d;font-weight:normal;">Эксперты</div>
<div class="t" style="left:1211px;top:973px;font-size:15px;line-height:15px;color:#6d6d6d;font-weight:normal;">Журнал</div>
<div class="a" style="left:113px;top:972px;width:1px;height:19px;background:#6d6d6d"></div>
<div class="a" style="left:357px;top:972px;width:1px;height:19px;background:#6d6d6d"></div>
<div class="a" style="left:434px;top:972px;width:1px;height:19px;background:#6d6d6d"></div>
<div class="a" style="left:534px;top:972px;width:1px;height:19px;background:#6d6d6d"></div>
<div class="a" style="left:631px;top:972px;width:1px;height:19px;background:#6d6d6d"></div>
<div class="a" style="left:707px;top:972px;width:1px;height:19px;background:#6d6d6d"></div>
<div class="a" style="left:784px;top:972px;width:1px;height:19px;background:#6d6d6d"></div>
<div class="a" style="left:869px;top:972px;width:1px;height:19px;background:#6d6d6d"></div>
<div class="a" style="left:950px;top:972px;width:1px;height:19px;background:#6d6d6d"></div>
<div class="a" style="left:1057px;top:972px;width:1px;height:19px;background:#6d6d6d"></div>
<div class="a" style="left:1107px;top:972px;width:1px;height:19px;background:#6d6d6d"></div>
<div class="a" style="left:1198px;top:972px;width:1px;height:19px;background:#6d6d6d"></div>
<div class="a" style="left:189px;top:968px;width:85px;height:25px;background:#fff;border:1px solid #000;border-top:none"></div>
<div class="t" style="left:202px;top:973px;font-size:15px;line-height:15px;color:#000;font-weight:normal;">История</div>
<div class="t" style="left:415px;top:980px;font-size:11px;line-height:11px;color:#e0102a;font-weight:bold;">7</div>
<div class="t" style="left:931px;top:980px;font-size:11px;line-height:11px;color:#e0102a;font-weight:bold;">1</div>
<div class="t" style="right:27px;top:973px;font-size:15px;line-height:15px;color:#000;font-weight:normal;">Тестер стратегий</div>
<div class="a" style="left:0;top:1000px;width:1920px;height:1px;background:#a0a0a0"></div>
<div class="a" style="left:0;top:1001px;width:1920px;height:1px;background:#fff"></div>
<div class="t" style="left:2px;top:1009px;font-size:15px;line-height:15px;color:#000;font-weight:normal;">Для вызова справки нажмите F1</div>
<div class="t" style="left:1055px;top:1010px;font-size:15.5px;line-height:15.5px;color:#000;font-weight:normal;transform:scaleX(0.99);transform-origin:0 0">Default</div>
<div class="a" style="left:1049px;top:1005px;width:1px;height:25px;background:#a0a0a0"></div>
<div class="a" style="left:1214px;top:1005px;width:1px;height:25px;background:#a0a0a0"></div>
<div class="a" style="left:1339px;top:1005px;width:1px;height:25px;background:#a0a0a0"></div>
<div class="a" style="left:1428px;top:1005px;width:1px;height:25px;background:#a0a0a0"></div>
<div class="a" style="left:1517px;top:1005px;width:1px;height:25px;background:#a0a0a0"></div>
<div class="a" style="left:1602px;top:1005px;width:1px;height:25px;background:#a0a0a0"></div>
<div class="a" style="left:1689px;top:1005px;width:1px;height:25px;background:#a0a0a0"></div>
<div class="a" style="left:1773px;top:1005px;width:1px;height:25px;background:#a0a0a0"></div>
<svg class="a" style="left:1778px;top:1005px" width="24" height="23" viewBox="0 0 24 23"><defs><linearGradient id="srvf" x1="0" y1="0" x2="1" y2="1"><stop offset="0" stop-color="#6cc4ff"/><stop offset="1" stop-color="#1a78d8"/></linearGradient></defs><path d="M1.5 2.5L4.5 1H13.5L15.5 2.5V19.5L13 21.5H4.5L1.5 19Z" fill="url(#srvf)"/><path d="M1.5 2.5L5 4.5V21.5L1.5 19Z" fill="#1a88e8"/><path d="M6.5 6.5H13.5V8H6.5ZM6.5 10H13.5V11.5H6.5Z" fill="#d8f0ff" opacity="0.9"/><circle cx="16.8" cy="17" r="5" fill="#3a9a2a"/><circle cx="16.8" cy="17" r="3.8" fill="#58b838"/><path d="M14.3 17L16.3 19L19.3 15.3" stroke="#fff" stroke-width="1.8" fill="none"/></svg>
<div class="t" style="left:1805px;top:1010px;font-size:15.5px;line-height:15.5px;color:#000;font-weight:normal;transform:scaleX(0.955);transform-origin:0 0">5450 / 14 Kb</div>
<div class="a" style="left:0;top:1030px;width:1920px;height:50px;background:linear-gradient(90deg,#2f2f2f 0,#2f2f2f 985px,#0e131b 1040px,#0b1018 1920px)"></div>
<div class="a" style="left:370px;top:1030px;width:61px;height:50px;background:#585858"></div>
<div class="a" style="left:313px;top:1078px;width:40px;height:2px;background:#76b9ed"></div>
<div class="a" style="left:354px;top:1078px;width:10px;height:2px;background:#76b9ed"></div>
<div class="a" style="left:370px;top:1078px;width:61px;height:2px;background:#76b9ed"></div>
<div class="a" style="left:1915px;top:1030px;width:1px;height:50px;background:#5a5a5a"></div>
<svg class="a" style="left:0;top:1030px" width="1920" height="50" viewBox="0 1030 1920 50">
<defs>
<linearGradient id="feat" x1="0" y1="1" x2="1" y2="0"><stop offset="0" stop-color="#8a2fc0"/><stop offset="0.6" stop-color="#c58ae8"/><stop offset="1" stop-color="#9a40d0"/></linearGradient>
</defs>
<!-- windows logo -->
<g fill="#fff">
<path d="M19.5 1046.3L28.5 1045.1V1054.5H19.5Z"/>
<path d="M29.5 1044.9L40.5 1043.4V1054.5H29.5Z"/>
<path d="M19.5 1055.5H28.5V1064.9L19.5 1063.7Z"/>
<path d="M29.5 1055.5H40.5V1066.6L29.5 1065.1Z"/>
</g>
<!-- search -->
<circle cx="92.8" cy="1052" r="6.6" fill="none" stroke="#fff" stroke-width="1.4"/>
<path d="M88.2 1056.8L80.3 1064.8" stroke="#fff" stroke-width="1.5"/>
<!-- task view -->
<g fill="none" stroke="#fff" stroke-width="1.3">
<path d="M140.6 1045V1047.6H152.6V1045"/>
<rect x="140.6" y="1050.3" width="12" height="10"/>
<path d="M140.6 1064.3V1061.6H152.6V1064.3"/>
<path d="M158.6 1045V1064.5"/>
</g>
<rect x="157" y="1051.5" width="3.2" height="3" fill="#fff"/>
<!-- folder -->
<path d="M200 1044.5Q200 1043 201.5 1043H210L212 1045H225.5Q227 1045 227 1046.5V1064.5Q227 1066 225.5 1066H201.5Q200 1066 200 1064.5Z" fill="#ffe08c"/>
<rect x="201.5" y="1044" width="5" height="1.6" fill="#fff"/>
<rect x="201.5" y="1044" width="1" height="1.6" fill="#3fb7ea"/>
<path d="M205 1066V1056.5Q205 1055 206.5 1055H221.5Q223 1055 223 1056.5V1066H219V1059H209V1066Z" fill="#3fb7ea"/>
<!-- feather -->
<path d="M263 1069C264 1062 270 1052 281 1046C285 1044 288 1041 289.5 1040C290.5 1046 288 1054 281 1059C275 1063 268 1065 263 1069Z" fill="url(#feat)"/>
<path d="M264 1068L286 1045" stroke="#5a1a88" stroke-width="0.8"/>
<!-- red 8 app -->
<defs><linearGradient id="brn" x1="0" y1="0" x2="1" y2="1"><stop offset="0" stop-color="#6a5248"/><stop offset="0.5" stop-color="#c8a890"/><stop offset="1" stop-color="#5a463c"/></linearGradient>
<linearGradient id="rd" x1="0" y1="0" x2="0" y2="1"><stop offset="0" stop-color="#a01818"/><stop offset="1" stop-color="#e02a2a"/></linearGradient></defs>
<path d="M334 1041.5C327 1044 322.5 1050 323.5 1056C324.5 1061 329 1064.5 333.5 1063.5L331 1060C328 1057 328 1051 332 1047.5L334.5 1051L336 1045Z" fill="url(#brn)"/>
<path d="M335 1041.5L343 1047L341.5 1053L344 1054L341 1063.5L337.5 1059Z" fill="url(#rd)"/>
<path d="M342.5 1041C349 1043 353 1049 352 1056L349.5 1054C350 1049 347 1044.5 342.5 1041Z" fill="#d82424"/>
<circle cx="347.5" cy="1057" r="3.2" fill="none" stroke="#f0f0f0" stroke-width="2.8"/>
<circle cx="347.5" cy="1063.6" r="3.9" fill="none" stroke="#f0f0f0" stroke-width="2.8"/>
<circle cx="347.5" cy="1057" r="1.3" fill="#c01818"/>
<!-- mt5 -->
<path d="M392 1055C391 1048 394.5 1044 399.5 1044C404.5 1044 408 1048 407 1055L399.5 1058Z" fill="#3e9e34"/>
<circle cx="399.5" cy="1043" r="3" fill="#5cc04c"/>
<path d="M386 1062C386 1057 389 1054.5 393 1054.5L400 1058L397 1067.5C390 1067.5 386 1066 386 1062Z" fill="#d8c22a"/>
<circle cx="388.5" cy="1062.5" r="2.7" fill="#e8dc50"/>
<path d="M414 1062C414 1057 411 1054.5 407 1054.5L400 1058L403 1067.5C410 1067.5 414 1066 414 1062Z" fill="#2a8ed8"/>
<circle cx="411" cy="1061.5" r="2.7" fill="#4aaee8"/>
<circle cx="400" cy="1056" r="5.6" fill="#f4f4f4"/>
<text x="400" y="1060.3" font-family="Liberation Sans" font-weight="bold" font-size="11" fill="#f0922a" text-anchor="middle">5</text>
<!-- people -->
<g fill="none" stroke="#fff" stroke-width="1.3">
<circle cx="1576.5" cy="1048.5" r="2.8"/>
<path d="M1571.5 1058C1572 1054 1574 1052.5 1576.5 1052.5C1579 1052.5 1581 1054 1581.5 1057"/>
<circle cx="1570" cy="1055" r="2.8"/>
<path d="M1564.5 1064.5C1565 1060.5 1567 1059 1570 1059C1573 1059 1575 1060.5 1575.5 1064.5"/>
</g>
<!-- chevron up -->
<path d="M1610.5 1058.5L1618 1051L1625.5 1058.5" fill="none" stroke="#fff" stroke-width="1.3"/>
<!-- onedrive cloud -->
<path d="M1641 1061C1637.5 1061 1637.5 1055.5 1641.5 1055.5C1642 1051 1648 1049.5 1651 1053C1655 1051.5 1658.5 1054.5 1657.5 1057.5C1659 1058 1658.5 1061 1656.5 1061Z" fill="#e6e6e6"/>
<!-- wifi -->
<g fill="none" stroke="#fff" stroke-width="1.2">
<path d="M1671.5 1063A13 13 0 0 1 1685 1049.5"/>
<path d="M1674.5 1063A10 10 0 0 1 1685 1052.5"/>
<path d="M1677.5 1063A7 7 0 0 1 1685 1055.5"/>
<path d="M1680.5 1063A4 4 0 0 1 1685 1058.5"/>
</g>
<circle cx="1684.5" cy="1062.5" r="1.5" fill="#fff"/>
<!-- speaker -->
<path d="M1698.5 1052.5H1702L1706.5 1048.5V1064.5L1702 1060.5H1698.5Z" fill="none" stroke="#fff" stroke-width="1.2"/>
<g fill="none" stroke="#fff" stroke-width="1.2">
<path d="M1709.5 1053.5A4 4 0 0 1 1709.5 1059.5"/>
<path d="M1712 1050.5A8 8 0 0 1 1712 1062.5"/>
<path d="M1715 1047.5A12 12 0 0 1 1715 1065.5"/>
</g>
<!-- notifications -->
<path d="M1869 1045H1889V1060H1874L1871 1063V1060H1869Z" fill="#fff"/>
<g stroke="#555" stroke-width="1"><path d="M1872 1049H1886M1872 1052H1886M1872 1055H1882"/></g>
<circle cx="1888" cy="1066" r="9" fill="#2a2a2a" stroke="#6a6a6a" stroke-width="1"/>
<text x="1888" y="1071" font-family="Liberation Sans" font-weight="bold" font-size="13" fill="#fff" text-anchor="middle">5</text>
</svg>

<div class="t" style="left:1732px;top:1049px;font-size:13.2px;line-height:13.2px;color:#fff;font-weight:normal;">РУС</div>
<div class="t" style="left:1794px;top:1037px;font-size:13.6px;line-height:13.6px;color:#fff;font-weight:normal;">13:18</div>
<div class="t" style="left:1777px;top:1060px;font-size:13.6px;line-height:13.6px;color:#fff;font-weight:normal;">13.05.2020</div>
</body></html>
